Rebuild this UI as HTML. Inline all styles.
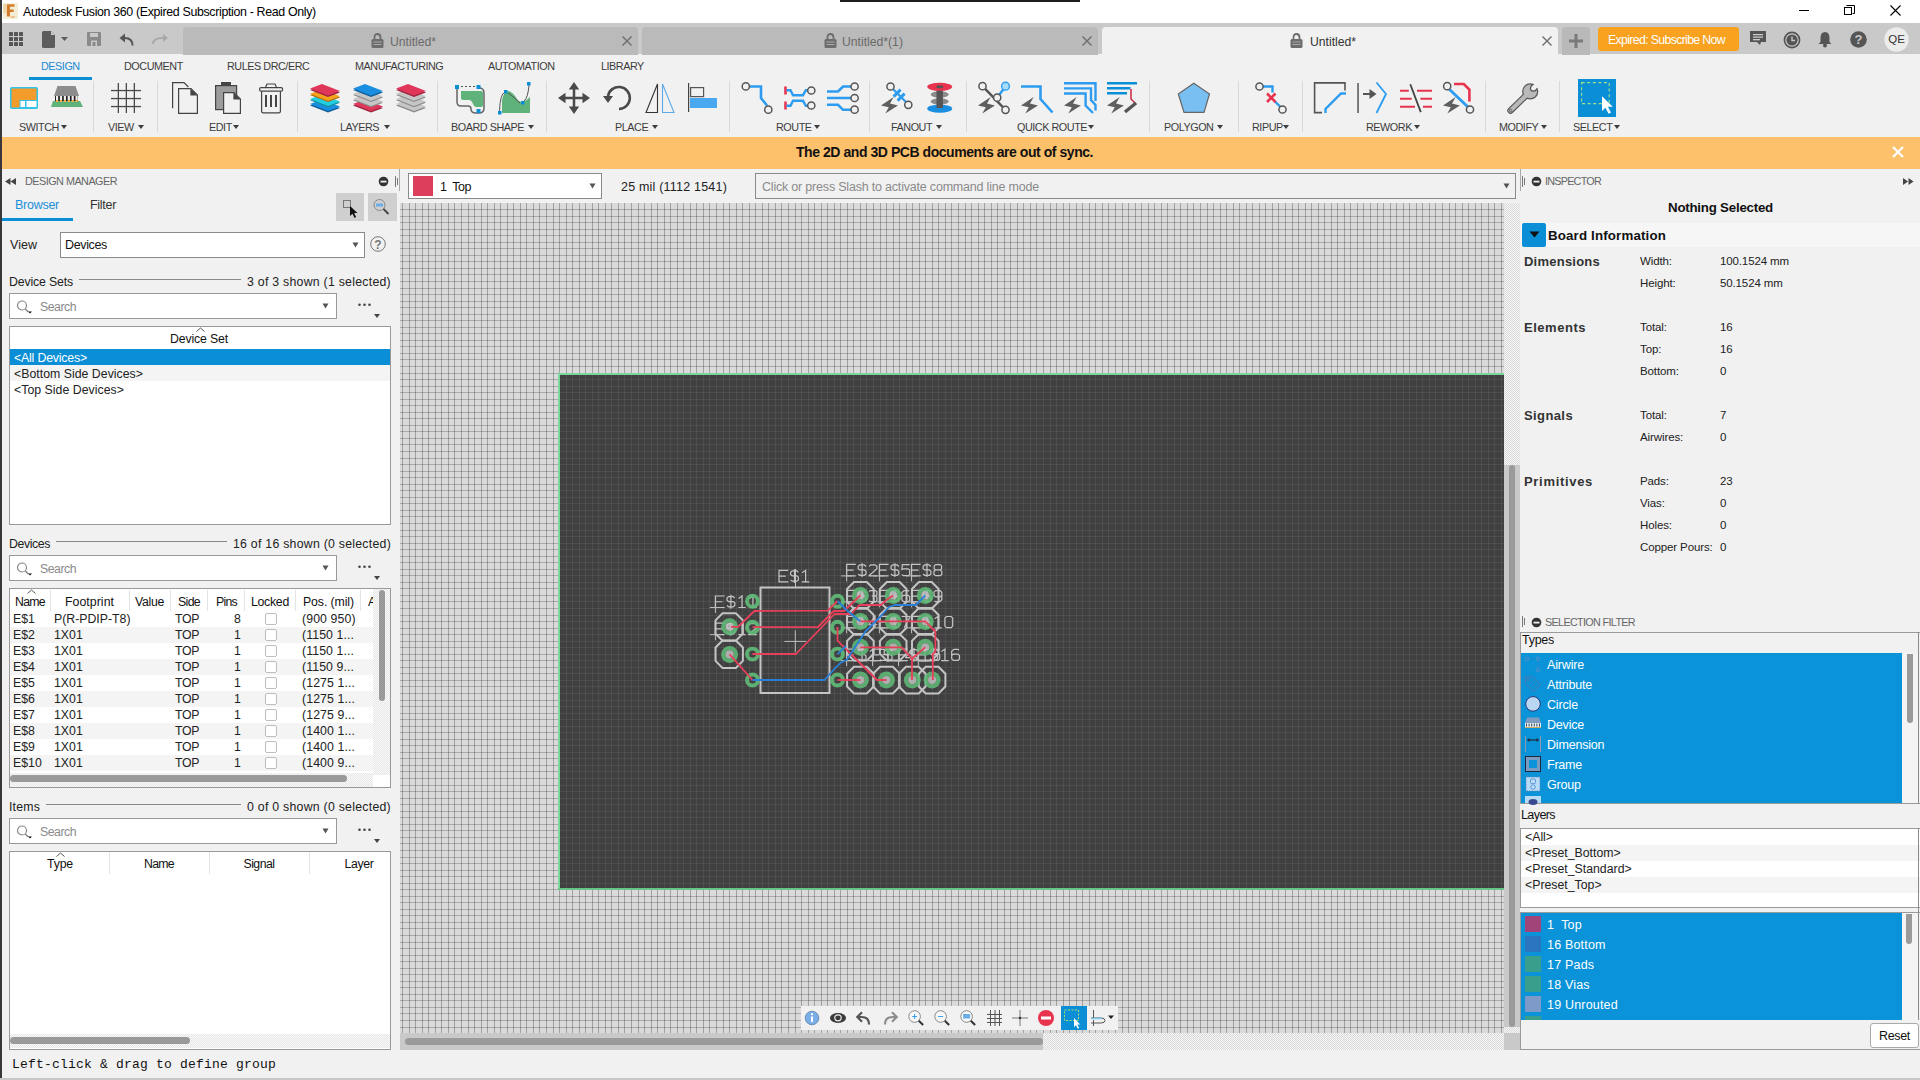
<!DOCTYPE html><html><head><meta charset="utf-8"><style>
html,body{margin:0;padding:0;width:1920px;height:1080px;overflow:hidden;background:#f1f1f1;font-family:"Liberation Sans",sans-serif;}
body>div,body>svg{position:absolute;box-sizing:border-box;}
.t{line-height:1;white-space:pre;}
</style></head><body>
<div style="left:0px;top:0px;width:1920px;height:23px;background:#fff"></div>
<div style="left:840px;top:0px;width:240px;height:2px;background:#1d1d1d"></div>
<div style="left:0px;top:23px;width:1920px;height:31px;background:#c9c9c9"></div>
<div style="left:0px;top:54px;width:1920px;height:83px;background:#f1f1f1"></div>
<div style="left:0px;top:137px;width:1920px;height:32px;background:#fdc06b"></div>
<div style="left:0px;top:1050px;width:1920px;height:30px;background:#f1f1f1"></div>
<div style="left:0px;top:1078px;width:1920px;height:2px;background:#c8c8c8"></div>
<div style="left:0px;top:0px;width:2px;height:1078px;background:#383838"></div>
<svg style="left:0;top:0" width="1920" height="1080" shape-rendering="crispEdges"><rect x="400" y="203" width="1104" height="830" fill="#dadada"/><path d="M402 203h1V1033h-1zM409 203h1V1033h-1zM415 203h1V1033h-1zM422 203h1V1033h-1zM428 203h1V1033h-1zM435 203h1V1033h-1zM441 203h1V1033h-1zM448 203h1V1033h-1zM454 203h1V1033h-1zM461 203h1V1033h-1zM468 203h1V1033h-1zM474 203h1V1033h-1zM481 203h1V1033h-1zM487 203h1V1033h-1zM494 203h1V1033h-1zM500 203h1V1033h-1zM507 203h1V1033h-1zM513 203h1V1033h-1zM520 203h1V1033h-1zM526 203h1V1033h-1zM533 203h1V1033h-1zM539 203h1V1033h-1zM546 203h1V1033h-1zM553 203h1V1033h-1zM559 203h1V1033h-1zM566 203h1V1033h-1zM572 203h1V1033h-1zM579 203h1V1033h-1zM585 203h1V1033h-1zM592 203h1V1033h-1zM598 203h1V1033h-1zM605 203h1V1033h-1zM611 203h1V1033h-1zM618 203h1V1033h-1zM624 203h1V1033h-1zM631 203h1V1033h-1zM638 203h1V1033h-1zM644 203h1V1033h-1zM651 203h1V1033h-1zM657 203h1V1033h-1zM664 203h1V1033h-1zM670 203h1V1033h-1zM677 203h1V1033h-1zM683 203h1V1033h-1zM690 203h1V1033h-1zM696 203h1V1033h-1zM703 203h1V1033h-1zM709 203h1V1033h-1zM716 203h1V1033h-1zM723 203h1V1033h-1zM729 203h1V1033h-1zM736 203h1V1033h-1zM742 203h1V1033h-1zM749 203h1V1033h-1zM755 203h1V1033h-1zM762 203h1V1033h-1zM768 203h1V1033h-1zM775 203h1V1033h-1zM781 203h1V1033h-1zM788 203h1V1033h-1zM795 203h1V1033h-1zM801 203h1V1033h-1zM808 203h1V1033h-1zM814 203h1V1033h-1zM821 203h1V1033h-1zM827 203h1V1033h-1zM834 203h1V1033h-1zM840 203h1V1033h-1zM847 203h1V1033h-1zM853 203h1V1033h-1zM860 203h1V1033h-1zM866 203h1V1033h-1zM873 203h1V1033h-1zM880 203h1V1033h-1zM886 203h1V1033h-1zM893 203h1V1033h-1zM899 203h1V1033h-1zM906 203h1V1033h-1zM912 203h1V1033h-1zM919 203h1V1033h-1zM925 203h1V1033h-1zM932 203h1V1033h-1zM938 203h1V1033h-1zM945 203h1V1033h-1zM951 203h1V1033h-1zM958 203h1V1033h-1zM965 203h1V1033h-1zM971 203h1V1033h-1zM978 203h1V1033h-1zM984 203h1V1033h-1zM991 203h1V1033h-1zM997 203h1V1033h-1zM1004 203h1V1033h-1zM1010 203h1V1033h-1zM1017 203h1V1033h-1zM1023 203h1V1033h-1zM1030 203h1V1033h-1zM1036 203h1V1033h-1zM1043 203h1V1033h-1zM1050 203h1V1033h-1zM1056 203h1V1033h-1zM1063 203h1V1033h-1zM1069 203h1V1033h-1zM1076 203h1V1033h-1zM1082 203h1V1033h-1zM1089 203h1V1033h-1zM1095 203h1V1033h-1zM1102 203h1V1033h-1zM1108 203h1V1033h-1zM1115 203h1V1033h-1zM1122 203h1V1033h-1zM1128 203h1V1033h-1zM1135 203h1V1033h-1zM1141 203h1V1033h-1zM1148 203h1V1033h-1zM1154 203h1V1033h-1zM1161 203h1V1033h-1zM1167 203h1V1033h-1zM1174 203h1V1033h-1zM1180 203h1V1033h-1zM1187 203h1V1033h-1zM1193 203h1V1033h-1zM1200 203h1V1033h-1zM1207 203h1V1033h-1zM1213 203h1V1033h-1zM1220 203h1V1033h-1zM1226 203h1V1033h-1zM1233 203h1V1033h-1zM1239 203h1V1033h-1zM1246 203h1V1033h-1zM1252 203h1V1033h-1zM1259 203h1V1033h-1zM1265 203h1V1033h-1zM1272 203h1V1033h-1zM1278 203h1V1033h-1zM1285 203h1V1033h-1zM1292 203h1V1033h-1zM1298 203h1V1033h-1zM1305 203h1V1033h-1zM1311 203h1V1033h-1zM1318 203h1V1033h-1zM1324 203h1V1033h-1zM1331 203h1V1033h-1zM1337 203h1V1033h-1zM1344 203h1V1033h-1zM1350 203h1V1033h-1zM1357 203h1V1033h-1zM1363 203h1V1033h-1zM1370 203h1V1033h-1zM1377 203h1V1033h-1zM1383 203h1V1033h-1zM1390 203h1V1033h-1zM1396 203h1V1033h-1zM1403 203h1V1033h-1zM1409 203h1V1033h-1zM1416 203h1V1033h-1zM1422 203h1V1033h-1zM1429 203h1V1033h-1zM1435 203h1V1033h-1zM1442 203h1V1033h-1zM1449 203h1V1033h-1zM1455 203h1V1033h-1zM1462 203h1V1033h-1zM1468 203h1V1033h-1zM1475 203h1V1033h-1zM1481 203h1V1033h-1zM1488 203h1V1033h-1zM1494 203h1V1033h-1zM1501 203h1V1033h-1z" fill="#000" fill-opacity="0.26"/><path d="M400 209H1504v1H400zM400 216H1504v1H400zM400 222H1504v1H400zM400 229H1504v1H400zM400 235H1504v1H400zM400 242H1504v1H400zM400 248H1504v1H400zM400 255H1504v1H400zM400 261H1504v1H400zM400 268H1504v1H400zM400 274H1504v1H400zM400 281H1504v1H400zM400 288H1504v1H400zM400 294H1504v1H400zM400 301H1504v1H400zM400 307H1504v1H400zM400 314H1504v1H400zM400 320H1504v1H400zM400 327H1504v1H400zM400 333H1504v1H400zM400 340H1504v1H400zM400 346H1504v1H400zM400 353H1504v1H400zM400 359H1504v1H400zM400 366H1504v1H400zM400 373H1504v1H400zM400 379H1504v1H400zM400 386H1504v1H400zM400 392H1504v1H400zM400 399H1504v1H400zM400 405H1504v1H400zM400 412H1504v1H400zM400 418H1504v1H400zM400 425H1504v1H400zM400 431H1504v1H400zM400 438H1504v1H400zM400 444H1504v1H400zM400 451H1504v1H400zM400 458H1504v1H400zM400 464H1504v1H400zM400 471H1504v1H400zM400 477H1504v1H400zM400 484H1504v1H400zM400 490H1504v1H400zM400 497H1504v1H400zM400 503H1504v1H400zM400 510H1504v1H400zM400 516H1504v1H400zM400 523H1504v1H400zM400 530H1504v1H400zM400 536H1504v1H400zM400 543H1504v1H400zM400 549H1504v1H400zM400 556H1504v1H400zM400 562H1504v1H400zM400 569H1504v1H400zM400 575H1504v1H400zM400 582H1504v1H400zM400 588H1504v1H400zM400 595H1504v1H400zM400 601H1504v1H400zM400 608H1504v1H400zM400 615H1504v1H400zM400 621H1504v1H400zM400 628H1504v1H400zM400 634H1504v1H400zM400 641H1504v1H400zM400 647H1504v1H400zM400 654H1504v1H400zM400 660H1504v1H400zM400 667H1504v1H400zM400 673H1504v1H400zM400 680H1504v1H400zM400 686H1504v1H400zM400 693H1504v1H400zM400 700H1504v1H400zM400 706H1504v1H400zM400 713H1504v1H400zM400 719H1504v1H400zM400 726H1504v1H400zM400 732H1504v1H400zM400 739H1504v1H400zM400 745H1504v1H400zM400 752H1504v1H400zM400 758H1504v1H400zM400 765H1504v1H400zM400 771H1504v1H400zM400 778H1504v1H400zM400 785H1504v1H400zM400 791H1504v1H400zM400 798H1504v1H400zM400 804H1504v1H400zM400 811H1504v1H400zM400 817H1504v1H400zM400 824H1504v1H400zM400 830H1504v1H400zM400 837H1504v1H400zM400 843H1504v1H400zM400 850H1504v1H400zM400 857H1504v1H400zM400 863H1504v1H400zM400 870H1504v1H400zM400 876H1504v1H400zM400 883H1504v1H400zM400 889H1504v1H400zM400 896H1504v1H400zM400 902H1504v1H400zM400 909H1504v1H400zM400 915H1504v1H400zM400 922H1504v1H400zM400 928H1504v1H400zM400 935H1504v1H400zM400 942H1504v1H400zM400 948H1504v1H400zM400 955H1504v1H400zM400 961H1504v1H400zM400 968H1504v1H400zM400 974H1504v1H400zM400 981H1504v1H400zM400 987H1504v1H400zM400 994H1504v1H400zM400 1000H1504v1H400zM400 1007H1504v1H400zM400 1013H1504v1H400zM400 1020H1504v1H400zM400 1027H1504v1H400z" fill="#000" fill-opacity="0.22"/><rect x="560" y="375" width="944" height="513" fill="#404040"/><path d="M566 375h1V888h-1zM572 375h1V888h-1zM579 375h1V888h-1zM585 375h1V888h-1zM592 375h1V888h-1zM598 375h1V888h-1zM605 375h1V888h-1zM611 375h1V888h-1zM618 375h1V888h-1zM624 375h1V888h-1zM631 375h1V888h-1zM638 375h1V888h-1zM644 375h1V888h-1zM651 375h1V888h-1zM657 375h1V888h-1zM664 375h1V888h-1zM670 375h1V888h-1zM677 375h1V888h-1zM683 375h1V888h-1zM690 375h1V888h-1zM696 375h1V888h-1zM703 375h1V888h-1zM709 375h1V888h-1zM716 375h1V888h-1zM723 375h1V888h-1zM729 375h1V888h-1zM736 375h1V888h-1zM742 375h1V888h-1zM749 375h1V888h-1zM755 375h1V888h-1zM762 375h1V888h-1zM768 375h1V888h-1zM775 375h1V888h-1zM781 375h1V888h-1zM788 375h1V888h-1zM795 375h1V888h-1zM801 375h1V888h-1zM808 375h1V888h-1zM814 375h1V888h-1zM821 375h1V888h-1zM827 375h1V888h-1zM834 375h1V888h-1zM840 375h1V888h-1zM847 375h1V888h-1zM853 375h1V888h-1zM860 375h1V888h-1zM866 375h1V888h-1zM873 375h1V888h-1zM880 375h1V888h-1zM886 375h1V888h-1zM893 375h1V888h-1zM899 375h1V888h-1zM906 375h1V888h-1zM912 375h1V888h-1zM919 375h1V888h-1zM925 375h1V888h-1zM932 375h1V888h-1zM938 375h1V888h-1zM945 375h1V888h-1zM951 375h1V888h-1zM958 375h1V888h-1zM965 375h1V888h-1zM971 375h1V888h-1zM978 375h1V888h-1zM984 375h1V888h-1zM991 375h1V888h-1zM997 375h1V888h-1zM1004 375h1V888h-1zM1010 375h1V888h-1zM1017 375h1V888h-1zM1023 375h1V888h-1zM1030 375h1V888h-1zM1036 375h1V888h-1zM1043 375h1V888h-1zM1050 375h1V888h-1zM1056 375h1V888h-1zM1063 375h1V888h-1zM1069 375h1V888h-1zM1076 375h1V888h-1zM1082 375h1V888h-1zM1089 375h1V888h-1zM1095 375h1V888h-1zM1102 375h1V888h-1zM1108 375h1V888h-1zM1115 375h1V888h-1zM1122 375h1V888h-1zM1128 375h1V888h-1zM1135 375h1V888h-1zM1141 375h1V888h-1zM1148 375h1V888h-1zM1154 375h1V888h-1zM1161 375h1V888h-1zM1167 375h1V888h-1zM1174 375h1V888h-1zM1180 375h1V888h-1zM1187 375h1V888h-1zM1193 375h1V888h-1zM1200 375h1V888h-1zM1207 375h1V888h-1zM1213 375h1V888h-1zM1220 375h1V888h-1zM1226 375h1V888h-1zM1233 375h1V888h-1zM1239 375h1V888h-1zM1246 375h1V888h-1zM1252 375h1V888h-1zM1259 375h1V888h-1zM1265 375h1V888h-1zM1272 375h1V888h-1zM1278 375h1V888h-1zM1285 375h1V888h-1zM1292 375h1V888h-1zM1298 375h1V888h-1zM1305 375h1V888h-1zM1311 375h1V888h-1zM1318 375h1V888h-1zM1324 375h1V888h-1zM1331 375h1V888h-1zM1337 375h1V888h-1zM1344 375h1V888h-1zM1350 375h1V888h-1zM1357 375h1V888h-1zM1363 375h1V888h-1zM1370 375h1V888h-1zM1377 375h1V888h-1zM1383 375h1V888h-1zM1390 375h1V888h-1zM1396 375h1V888h-1zM1403 375h1V888h-1zM1409 375h1V888h-1zM1416 375h1V888h-1zM1422 375h1V888h-1zM1429 375h1V888h-1zM1435 375h1V888h-1zM1442 375h1V888h-1zM1449 375h1V888h-1zM1455 375h1V888h-1zM1462 375h1V888h-1zM1468 375h1V888h-1zM1475 375h1V888h-1zM1481 375h1V888h-1zM1488 375h1V888h-1zM1494 375h1V888h-1zM1501 375h1V888h-1z" fill="#fff" fill-opacity="0.07"/><path d="M560 379H1504v1H560zM560 386H1504v1H560zM560 392H1504v1H560zM560 399H1504v1H560zM560 405H1504v1H560zM560 412H1504v1H560zM560 418H1504v1H560zM560 425H1504v1H560zM560 431H1504v1H560zM560 438H1504v1H560zM560 444H1504v1H560zM560 451H1504v1H560zM560 458H1504v1H560zM560 464H1504v1H560zM560 471H1504v1H560zM560 477H1504v1H560zM560 484H1504v1H560zM560 490H1504v1H560zM560 497H1504v1H560zM560 503H1504v1H560zM560 510H1504v1H560zM560 516H1504v1H560zM560 523H1504v1H560zM560 530H1504v1H560zM560 536H1504v1H560zM560 543H1504v1H560zM560 549H1504v1H560zM560 556H1504v1H560zM560 562H1504v1H560zM560 569H1504v1H560zM560 575H1504v1H560zM560 582H1504v1H560zM560 588H1504v1H560zM560 595H1504v1H560zM560 601H1504v1H560zM560 608H1504v1H560zM560 615H1504v1H560zM560 621H1504v1H560zM560 628H1504v1H560zM560 634H1504v1H560zM560 641H1504v1H560zM560 647H1504v1H560zM560 654H1504v1H560zM560 660H1504v1H560zM560 667H1504v1H560zM560 673H1504v1H560zM560 680H1504v1H560zM560 686H1504v1H560zM560 693H1504v1H560zM560 700H1504v1H560zM560 706H1504v1H560zM560 713H1504v1H560zM560 719H1504v1H560zM560 726H1504v1H560zM560 732H1504v1H560zM560 739H1504v1H560zM560 745H1504v1H560zM560 752H1504v1H560zM560 758H1504v1H560zM560 765H1504v1H560zM560 771H1504v1H560zM560 778H1504v1H560zM560 785H1504v1H560zM560 791H1504v1H560zM560 798H1504v1H560zM560 804H1504v1H560zM560 811H1504v1H560zM560 817H1504v1H560zM560 824H1504v1H560zM560 830H1504v1H560zM560 837H1504v1H560zM560 843H1504v1H560zM560 850H1504v1H560zM560 857H1504v1H560zM560 863H1504v1H560zM560 870H1504v1H560zM560 876H1504v1H560zM560 883H1504v1H560z" fill="#fff" fill-opacity="0.07"/><rect x="558" y="373" width="946" height="2" fill="#7ad79a"/><rect x="558" y="373" width="2" height="517" fill="#7ad79a"/><rect x="558" y="888" width="946" height="2" fill="#66c486"/></svg>
<svg style="left:3px;top:3px;" width="15" height="16" viewBox="0 0 15 16"><rect x="0" y="0" width="15" height="16" fill="#f4eed6"/><rect x="0.3" y="1" width="2.8" height="9" fill="#f0d6a6"/><path d="M3.8 1.8Q3.8 1.2 4.6 1.2H11q.6 0 .6.8v1.2q0 .6-.6.6H7v2.7h3.2q.5 0 .5.6v1.3q0 .6-.5.6H7v3.8q0 .6-.6.6H4.4q-.6 0-.6-.6z" fill="#d27c2c"/><rect x="7.5" y="13.3" width="4.5" height="1.4" fill="#eba45c" opacity=".8"/></svg>
<div class="t" style="left:23px;top:5.50px;font-size:12.4px;color:#000;font-weight:normal;font-family:'Liberation Sans', sans-serif;letter-spacing:-0.343px;">Autodesk Fusion 360 (Expired Subscription - Read Only)</div>
<svg style="left:1790px;top:0px;" width="130" height="23" viewBox="0 0 130 23"><rect x="9" y="10" width="10" height="1" fill="#000"/><path d="M56.5 5.5h8v8h-2" fill="none" stroke="#000"/><rect x="54.5" y="7.5" width="7" height="7" fill="none" stroke="#000"/><path d="M100.5 5.5l10 10M110.5 5.5l-10 10" stroke="#000" stroke-width="1.1"/></svg>
<svg style="left:9px;top:32px;" width="14" height="14" viewBox="0 0 14 14"><rect x="0" y="0" width="4" height="4" rx="0.6" fill="#555"/><rect x="5" y="0" width="4" height="4" rx="0.6" fill="#555"/><rect x="10" y="0" width="4" height="4" rx="0.6" fill="#555"/><rect x="0" y="5" width="4" height="4" rx="0.6" fill="#555"/><rect x="5" y="5" width="4" height="4" rx="0.6" fill="#555"/><rect x="10" y="5" width="4" height="4" rx="0.6" fill="#555"/><rect x="0" y="10" width="4" height="4" rx="0.6" fill="#555"/><rect x="5" y="10" width="4" height="4" rx="0.6" fill="#555"/><rect x="10" y="10" width="4" height="4" rx="0.6" fill="#555"/></svg>
<svg style="left:42px;top:31px;" width="28" height="17" viewBox="0 0 28 17"><path d="M0 1.5Q0 0 1.5 0H9l4 4v11.5Q13 17 11.5 17h-10Q0 17 0 15.5z" fill="#5c5c5c"/><path d="M9 0v4h4" fill="#c9c9c9"/><path d="M19 6h7l-3.5 4z" fill="#5c5c5c"/></svg>
<svg style="left:87px;top:32px;" width="14" height="14" viewBox="0 0 14 14"><path d="M0 1Q0 0 1 0h12q1 0 1 1v12q0 1-1 1H1q-1 0-1-1z" fill="#8a8a8a"/><rect x="3" y="1" width="8" height="4" fill="#c9c9c9"/><rect x="4" y="8.5" width="6" height="5.5" fill="#c9c9c9"/><rect x="5.5" y="10" width="3" height="4" fill="#8a8a8a"/></svg>
<svg style="left:119px;top:32px;" width="16" height="14" viewBox="0 0 16 14"><path d="M13.5 13.5Q13.5 6 6 6H2" fill="none" stroke="#555" stroke-width="2"/><path d="M0.5 6L6 1.5v9z" fill="#555"/></svg>
<svg style="left:151px;top:33px;" width="18" height="12" viewBox="0 0 18 12"><path d="M1.5 11Q3 5 11 5h3" fill="none" stroke="#a9a9a9" stroke-width="2"/><path d="M17 5l-5-4v8z" fill="#a9a9a9"/></svg>
<div style="left:183px;top:27px;width:455px;height:28px;background:#bababa;border-radius:4px 4px 0 0"></div>
<svg style="left:371px;top:33px;" width="13" height="15" viewBox="0 0 13 15"><path d="M3.5 6V4.5Q3.5 1 6.5 1t3 3.5V6" fill="none" stroke="#6d6d6d" stroke-width="1.8"/><rect x="0.5" y="6" width="12" height="9" rx="1.5" fill="#6d6d6d"/><rect x="2.5" y="8.5" width="8" height="1" fill="#d0d0d0" opacity=".6"/><rect x="2.5" y="11" width="8" height="1" fill="#d0d0d0" opacity=".6"/></svg>
<div class="t" style="left:390px;top:35.67px;font-size:12.2px;color:#6a6a6a;font-weight:normal;font-family:'Liberation Sans', sans-serif;">Untitled*</div>
<svg style="left:622px;top:36px;" width="10" height="10" viewBox="0 0 10 10"><path d="M0.5 0.5l9 9M9.5 0.5l-9 9" stroke="#6d6d6d" stroke-width="1.4"/></svg>
<div style="left:642px;top:27px;width:456px;height:28px;background:#bababa;border-radius:4px 4px 0 0"></div>
<svg style="left:824px;top:33px;" width="13" height="15" viewBox="0 0 13 15"><path d="M3.5 6V4.5Q3.5 1 6.5 1t3 3.5V6" fill="none" stroke="#6d6d6d" stroke-width="1.8"/><rect x="0.5" y="6" width="12" height="9" rx="1.5" fill="#6d6d6d"/><rect x="2.5" y="8.5" width="8" height="1" fill="#d0d0d0" opacity=".6"/><rect x="2.5" y="11" width="8" height="1" fill="#d0d0d0" opacity=".6"/></svg>
<div class="t" style="left:842px;top:35.67px;font-size:12.2px;color:#6a6a6a;font-weight:normal;font-family:'Liberation Sans', sans-serif;">Untitled*(1)</div>
<svg style="left:1082px;top:36px;" width="10" height="10" viewBox="0 0 10 10"><path d="M0.5 0.5l9 9M9.5 0.5l-9 9" stroke="#6d6d6d" stroke-width="1.4"/></svg>
<div style="left:1102px;top:27px;width:456px;height:28px;background:#f1f1f1;border-radius:4px 4px 0 0"></div>
<svg style="left:1290px;top:33px;" width="13" height="15" viewBox="0 0 13 15"><path d="M3.5 6V4.5Q3.5 1 6.5 1t3 3.5V6" fill="none" stroke="#6d6d6d" stroke-width="1.8"/><rect x="0.5" y="6" width="12" height="9" rx="1.5" fill="#6d6d6d"/><rect x="2.5" y="8.5" width="8" height="1" fill="#d0d0d0" opacity=".6"/><rect x="2.5" y="11" width="8" height="1" fill="#d0d0d0" opacity=".6"/></svg>
<div class="t" style="left:1310px;top:35.67px;font-size:12.2px;color:#333;font-weight:normal;font-family:'Liberation Sans', sans-serif;">Untitled*</div>
<svg style="left:1542px;top:36px;" width="10" height="10" viewBox="0 0 10 10"><path d="M0.5 0.5l9 9M9.5 0.5l-9 9" stroke="#6d6d6d" stroke-width="1.4"/></svg>
<div style="left:1562px;top:27px;width:28px;height:28px;background:#b9b9b9;border-radius:3px 3px 0 0"></div>
<svg style="left:1569px;top:34px;" width="14" height="14" viewBox="0 0 14 14"><rect x="0" y="5.5" width="14" height="3" fill="#7a7a7a"/><rect x="5.5" y="0" width="3" height="14" fill="#7a7a7a"/></svg>
<div style="left:1598px;top:27px;width:141px;height:24px;background:#f8a21f;border-radius:3px"></div>
<div class="t" style="left:1608px;top:33.59px;font-size:12.3px;color:#fff;font-weight:normal;font-family:'Liberation Sans', sans-serif;letter-spacing:-0.648px;">Expired: Subscribe Now</div>
<svg style="left:1750px;top:31px;" width="18" height="17" viewBox="0 0 18 17"><path d="M0 0h16v11H11l-1 3-3-3H0z" fill="#555"/><rect x="3" y="3" width="10" height="1.3" fill="#c9c9c9"/><rect x="3" y="5.5" width="10" height="1.3" fill="#c9c9c9"/><rect x="3" y="8" width="7" height="1.3" fill="#c9c9c9"/></svg>
<svg style="left:1783px;top:31px;" width="18" height="18" viewBox="0 0 18 18"><circle cx="9" cy="9" r="7.6" fill="none" stroke="#555" stroke-width="1.6"/><circle cx="9" cy="9" r="5.6" fill="#555"/><path d="M9 5.5V9.5h3" fill="none" stroke="#c9c9c9" stroke-width="1.4"/></svg>
<svg style="left:1818px;top:31px;" width="14" height="17" viewBox="0 0 14 17"><path d="M7 1Q11.5 1 11.5 7V11L13.5 13H0.5L2.5 11V7Q2.5 1 7 1z" fill="#555"/><circle cx="7" cy="14.5" r="2" fill="#555"/></svg>
<svg style="left:1850px;top:31px;" width="17" height="17" viewBox="0 0 17 17"><circle cx="8.5" cy="8.5" r="8.3" fill="#555"/><text x="8.5" y="13.2" text-anchor="middle" font-family="Liberation Sans" font-weight="bold" font-size="13" fill="#c9c9c9">?</text></svg>
<svg style="left:1884px;top:27px;" width="25" height="25" viewBox="0 0 25 25"><circle cx="12.5" cy="12.5" r="12.2" fill="#ececec"/></svg>
<div class="t" style="left:1396.5px;width:1000px;text-align:center;top:34.27px;font-size:11.5px;color:#333;font-weight:normal;font-family:'Liberation Sans', sans-serif;">QE</div>
<div class="t" style="left:41px;top:61.36px;font-size:10.8px;color:#1b8ad3;font-weight:normal;font-family:'Liberation Sans', sans-serif;letter-spacing:-0.45px;">DESIGN</div>
<div class="t" style="left:124px;top:61.36px;font-size:10.8px;color:#3c3c3c;font-weight:normal;font-family:'Liberation Sans', sans-serif;letter-spacing:-0.45px;">DOCUMENT</div>
<div class="t" style="left:227px;top:61.36px;font-size:10.8px;color:#3c3c3c;font-weight:normal;font-family:'Liberation Sans', sans-serif;letter-spacing:-0.45px;">RULES DRC/ERC</div>
<div class="t" style="left:355px;top:61.36px;font-size:10.8px;color:#3c3c3c;font-weight:normal;font-family:'Liberation Sans', sans-serif;letter-spacing:-0.45px;">MANUFACTURING</div>
<div class="t" style="left:488px;top:61.36px;font-size:10.8px;color:#3c3c3c;font-weight:normal;font-family:'Liberation Sans', sans-serif;letter-spacing:-0.45px;">AUTOMATION</div>
<div class="t" style="left:601px;top:61.36px;font-size:10.8px;color:#3c3c3c;font-weight:normal;font-family:'Liberation Sans', sans-serif;letter-spacing:-0.45px;">LIBRARY</div>
<div style="left:29px;top:77px;width:63px;height:3px;background:#0a8fd6"></div>
<div style="left:93px;top:81px;width:1px;height:51px;background:#d9d9d9"></div>
<div style="left:157px;top:81px;width:1px;height:51px;background:#d9d9d9"></div>
<div style="left:297px;top:81px;width:1px;height:51px;background:#d9d9d9"></div>
<div style="left:437px;top:81px;width:1px;height:51px;background:#d9d9d9"></div>
<div style="left:546px;top:81px;width:1px;height:51px;background:#d9d9d9"></div>
<div style="left:729px;top:81px;width:1px;height:51px;background:#d9d9d9"></div>
<div style="left:869px;top:81px;width:1px;height:51px;background:#d9d9d9"></div>
<div style="left:966px;top:81px;width:1px;height:51px;background:#d9d9d9"></div>
<div style="left:1149px;top:81px;width:1px;height:51px;background:#d9d9d9"></div>
<div style="left:1238px;top:81px;width:1px;height:51px;background:#d9d9d9"></div>
<div style="left:1302px;top:81px;width:1px;height:51px;background:#d9d9d9"></div>
<div style="left:1485px;top:81px;width:1px;height:51px;background:#d9d9d9"></div>
<div style="left:1559px;top:81px;width:1px;height:51px;background:#d9d9d9"></div>
<div class="t" style="left:19px;top:121.86px;font-size:10.8px;color:#3c3c3c;font-weight:normal;font-family:'Liberation Sans', sans-serif;letter-spacing:-0.45px;">SWITCH</div>
<div class="t" style="left:108px;top:121.86px;font-size:10.8px;color:#3c3c3c;font-weight:normal;font-family:'Liberation Sans', sans-serif;letter-spacing:-0.45px;">VIEW</div>
<div class="t" style="left:209px;top:121.86px;font-size:10.8px;color:#3c3c3c;font-weight:normal;font-family:'Liberation Sans', sans-serif;letter-spacing:-0.45px;">EDIT</div>
<div class="t" style="left:340px;top:121.86px;font-size:10.8px;color:#3c3c3c;font-weight:normal;font-family:'Liberation Sans', sans-serif;letter-spacing:-0.45px;">LAYERS</div>
<div class="t" style="left:451px;top:121.86px;font-size:10.8px;color:#3c3c3c;font-weight:normal;font-family:'Liberation Sans', sans-serif;letter-spacing:-0.45px;">BOARD SHAPE</div>
<div class="t" style="left:615px;top:121.86px;font-size:10.8px;color:#3c3c3c;font-weight:normal;font-family:'Liberation Sans', sans-serif;letter-spacing:-0.45px;">PLACE</div>
<div class="t" style="left:776px;top:121.86px;font-size:10.8px;color:#3c3c3c;font-weight:normal;font-family:'Liberation Sans', sans-serif;letter-spacing:-0.45px;">ROUTE</div>
<div class="t" style="left:891px;top:121.86px;font-size:10.8px;color:#3c3c3c;font-weight:normal;font-family:'Liberation Sans', sans-serif;letter-spacing:-0.45px;">FANOUT</div>
<div class="t" style="left:1017px;top:121.86px;font-size:10.8px;color:#3c3c3c;font-weight:normal;font-family:'Liberation Sans', sans-serif;letter-spacing:-0.45px;">QUICK ROUTE</div>
<div class="t" style="left:1164px;top:121.86px;font-size:10.8px;color:#3c3c3c;font-weight:normal;font-family:'Liberation Sans', sans-serif;letter-spacing:-0.45px;">POLYGON</div>
<div class="t" style="left:1252px;top:121.86px;font-size:10.8px;color:#3c3c3c;font-weight:normal;font-family:'Liberation Sans', sans-serif;letter-spacing:-0.45px;">RIPUP</div>
<div class="t" style="left:1366px;top:121.86px;font-size:10.8px;color:#3c3c3c;font-weight:normal;font-family:'Liberation Sans', sans-serif;letter-spacing:-0.45px;">REWORK</div>
<div class="t" style="left:1499px;top:121.86px;font-size:10.8px;color:#3c3c3c;font-weight:normal;font-family:'Liberation Sans', sans-serif;letter-spacing:-0.45px;">MODIFY</div>
<div class="t" style="left:1573px;top:121.86px;font-size:10.8px;color:#3c3c3c;font-weight:normal;font-family:'Liberation Sans', sans-serif;letter-spacing:-0.45px;">SELECT</div>
<svg style="left:0px;top:0px;" width="1920" height="140" viewBox="0 0 1920 140"><path d="M61 125h6l-3 4z" fill="#3c3c3c"/><path d="M138 125h6l-3 4z" fill="#3c3c3c"/><path d="M233 125h6l-3 4z" fill="#3c3c3c"/><path d="M384 125h6l-3 4z" fill="#3c3c3c"/><path d="M528 125h6l-3 4z" fill="#3c3c3c"/><path d="M652 125h6l-3 4z" fill="#3c3c3c"/><path d="M814 125h6l-3 4z" fill="#3c3c3c"/><path d="M936 125h6l-3 4z" fill="#3c3c3c"/><path d="M1088 125h6l-3 4z" fill="#3c3c3c"/><path d="M1217 125h6l-3 4z" fill="#3c3c3c"/><path d="M1283 125h6l-3 4z" fill="#3c3c3c"/><path d="M1414 125h6l-3 4z" fill="#3c3c3c"/><path d="M1541 125h6l-3 4z" fill="#3c3c3c"/><path d="M1614 125h6l-3 4z" fill="#3c3c3c"/><rect x="10.75" y="87.75" width="26.5" height="20.5" rx="1" fill="#f39c2c" stroke="#34c3e8" stroke-width="1.5"/><rect x="19.5" y="100" width="18" height="8" fill="#34c3e8"/><rect x="20.5" y="101" width="4.5" height="6" fill="#fff"/><rect x="26.5" y="101" width="10" height="6" fill="#fff"/><path d="M53 101h27l3 6H51z" fill="#5fb27a"/><path d="M57.5 86h18l3.5 10H54z" fill="#8c8c8c"/><rect x="55" y="96" width="23" height="5" fill="#222"/><rect x="56.0" y="96" width="2.2" height="4" fill="#eee"/><rect x="56.0" y="100" width="2.2" height="2" fill="#f5b04a"/><rect x="59.9" y="96" width="2.2" height="4" fill="#eee"/><rect x="59.9" y="100" width="2.2" height="2" fill="#f5b04a"/><rect x="63.8" y="96" width="2.2" height="4" fill="#eee"/><rect x="63.8" y="100" width="2.2" height="2" fill="#f5b04a"/><rect x="67.7" y="96" width="2.2" height="4" fill="#eee"/><rect x="67.7" y="100" width="2.2" height="2" fill="#f5b04a"/><rect x="71.6" y="96" width="2.2" height="4" fill="#eee"/><rect x="71.6" y="100" width="2.2" height="2" fill="#f5b04a"/><rect x="75.5" y="96" width="2.2" height="4" fill="#eee"/><rect x="75.5" y="100" width="2.2" height="2" fill="#f5b04a"/><rect x="117.7" y="83" width="1.3" height="30" fill="#4a4a4a"/><rect x="125.7" y="83" width="1.3" height="30" fill="#4a4a4a"/><rect x="133.7" y="83" width="1.3" height="30" fill="#4a4a4a"/><rect x="111" y="89.9" width="30" height="1.3" fill="#4a4a4a"/><rect x="111" y="97.9" width="30" height="1.3" fill="#4a4a4a"/><rect x="111" y="105.9" width="30" height="1.3" fill="#4a4a4a"/><path d="M172.6 108.2V82.6H184l4.4 4.4" fill="none" stroke="#444" stroke-width="1.2"/><path d="M178.6 113.4V88.6h12.4l6.4 6.4v18.4z" fill="#f1f1f1" stroke="#444" stroke-width="1.2"/><path d="M190.4 88.6v6.8h7z" fill="#444"/><rect x="215.6" y="85.6" width="21" height="24" fill="#9c9c9c" stroke="#444" stroke-width="1.2"/><rect x="221" y="82" width="10" height="4" fill="#444"/><path d="M223.6 113.4V92.6h10.4l6.4 6.4v14.4z" fill="#f1f1f1" stroke="#444" stroke-width="1.2"/><path d="M233.4 92.6v6.8h7z" fill="#444"/><rect x="259.6" y="87.6" width="23" height="3.6" rx="1.5" fill="none" stroke="#444" stroke-width="1.2"/><path d="M265.5 87.6l1.5-3.6h8l1.5 3.6" fill="none" stroke="#444" stroke-width="1.2"/><path d="M261.6 91.2v20q0 1.6 1.6 1.6h15.6q1.6 0 1.6-1.6v-20" fill="none" stroke="#444" stroke-width="1.2"/><rect x="265" y="95" width="2" height="12" fill="#444"/><rect x="270" y="95" width="2" height="12" fill="#444"/><rect x="275" y="95" width="2" height="12" fill="#444"/><path d="M310 105.5L322 101.0L340 108.0L328 112.5z" fill="#105f9a"/><path d="M310 104.1L322 99.6L340 106.6L328 111.1z" fill="#1a8ee0"/><path d="M310 100.30000000000001L322 95.80000000000001L340 102.80000000000001L328 107.30000000000001z" fill="#168f9c"/><path d="M310 98.9L322 94.4L340 101.4L328 105.9z" fill="#23cde0"/><path d="M310 95.10000000000001L322 90.60000000000001L340 97.60000000000001L328 102.10000000000001z" fill="#b06f10"/><path d="M310 93.7L322 89.2L340 96.2L328 100.7z" fill="#f7a21b"/><path d="M310 89.9L322 85.4L340 92.4L328 96.9z" fill="#9e2640"/><path d="M310 88.5L322 84L340 91L328 95.5z" fill="#e0365a"/><path d="M353 105.5L365 101.0L383 108.0L371 112.5z" fill="#9e2640"/><path d="M353 104.1L365 99.6L383 106.6L371 111.1z" fill="#e0365a"/><path d="M353 100.30000000000001L365 95.80000000000001L383 102.80000000000001L371 107.30000000000001z" fill="#8c8c8c"/><path d="M353 98.9L365 94.4L383 101.4L371 105.9z" fill="#c6c6c6"/><path d="M353 95.10000000000001L365 90.60000000000001L383 97.60000000000001L371 102.10000000000001z" fill="#8c8c8c"/><path d="M353 93.7L365 89.2L383 96.2L371 100.7z" fill="#c6c6c6"/><path d="M353 89.9L365 85.4L383 92.4L371 96.9z" fill="#105f9a"/><path d="M353 88.5L365 84L383 91L371 95.5z" fill="#1a8ee0"/><path d="M396 105.5L408 101.0L426 108.0L414 112.5z" fill="#8c8c8c"/><path d="M396 104.1L408 99.6L426 106.6L414 111.1z" fill="#c6c6c6"/><path d="M396 100.30000000000001L408 95.80000000000001L426 102.80000000000001L414 107.30000000000001z" fill="#8c8c8c"/><path d="M396 98.9L408 94.4L426 101.4L414 105.9z" fill="#c6c6c6"/><path d="M396 95.10000000000001L408 90.60000000000001L426 97.60000000000001L414 102.10000000000001z" fill="#8c8c8c"/><path d="M396 93.7L408 89.2L426 96.2L414 100.7z" fill="#c6c6c6"/><path d="M396 89.9L408 85.4L426 92.4L414 96.9z" fill="#9e2640"/><path d="M396 88.5L408 84L426 91L414 95.5z" fill="#e0365a"/><path d="M457 89v13q0 4 4 4h7q3 0 3 3q0 4 5 4h3q5 0 5-5V93q0-5-5-5" fill="none" stroke="#666" stroke-width="1.5"/><path d="M461 91h20q2 0 2 2v12q0 2-2 2h-5q-2 0-3-3l-1-2q-1-2-3-2h-6q-2 0-2-2z" fill="#5fb27a"/><path d="M461 86.5h15" stroke="#555" stroke-width="1.2" stroke-dasharray="2 2"/><rect x="455" y="85" width="4" height="4" fill="#0a8fd6"/><rect x="476.5" y="85" width="4" height="4" fill="#0a8fd6"/><rect x="476.5" y="109" width="4" height="4" fill="#0a8fd6"/><path d="M502 113V100q2-9 6-9q4 0 9 8q2 3 4 3q4 0 9-5v16z" fill="#5fb27a"/><path d="M499.5 112Q500 93 505 92.5M508 93Q514 97 520 103M524 101Q528 98 529 85" fill="none" stroke="#555" stroke-width="1"/><rect x="504" y="90" width="3.5" height="3.5" fill="#0a8fd6"/><rect x="521" y="101" width="3.5" height="3.5" fill="#0a8fd6"/><rect x="498" y="111" width="3.5" height="3.5" fill="#0a8fd6"/><rect x="527" y="82" width="3.5" height="3.5" fill="#0a8fd6"/><path d="M574 88V108M564 98H584" stroke="#4a4a4a" stroke-width="2.5"/><path d="M574 82l5.2 7.5h-10.4zM574 114l5.2-7.5h-10.4zM558 98l7.5-5.2v10.4zM590 98l-7.5-5.2v10.4z" fill="#4a4a4a"/><path d="M608 96A11 11 0 1 1 619 109" fill="none" stroke="#4a4a4a" stroke-width="2.6"/><path d="M603 96h10l-5 7z" fill="#4a4a4a"/><path d="M657.5 84v28.5h-11.5z" fill="none" stroke="#333" stroke-width="1.1"/><path d="M662.5 84v28.5h11.5z" fill="none" stroke="#5ea9e8" stroke-width="1.1"/><rect x="688" y="83" width="1.2" height="29" fill="#444"/><rect x="690.6" y="87.6" width="13" height="9" fill="#f1f1f1" stroke="#555" stroke-width="1.2"/><rect x="690" y="98" width="27" height="10" fill="#4aa8f0"/><path d="M749 86.5h12v11.5l6 7.5" fill="none" stroke="#2d9cf0" stroke-width="2.6"/><circle cx="745.8" cy="86.4" r="3.6" fill="#f1f1f1" stroke="#555" stroke-width="1.5"/><circle cx="768.3" cy="109.7" r="3.6" fill="#f1f1f1" stroke="#555" stroke-width="1.5"/><rect x="784.2" y="86.5" width="2.6" height="8" fill="#e8334f"/><rect x="784.2" y="101.5" width="2.6" height="8" fill="#e8334f"/><path d="M786.5 90.2h4l2.5 5h10l2.8-5h2.5M786.5 105.8h4l2.5-5h10l2.8 5h2.5" fill="none" stroke="#2d9cf0" stroke-width="2.4"/><circle cx="811.3" cy="90.5" r="3.6" fill="#f1f1f1" stroke="#555" stroke-width="1.5"/><circle cx="811.3" cy="105.5" r="3.6" fill="#f1f1f1" stroke="#555" stroke-width="1.5"/><path d="M827 91.5h11l5-5h8.5M827 98h24.5M827 104.8h11l5 5h8.5" fill="none" stroke="#2d9cf0" stroke-width="2.6"/><circle cx="854.6" cy="86.5" r="3.6" fill="#f1f1f1" stroke="#555" stroke-width="1.5"/><circle cx="854.6" cy="98" r="3.6" fill="#f1f1f1" stroke="#555" stroke-width="1.5"/><circle cx="854.6" cy="109.7" r="3.6" fill="#f1f1f1" stroke="#555" stroke-width="1.5"/><path d="M893.7 97L881 105.5L888.8 107.3L885.3 113.5L897.9 105.4L890 103.6z" fill="#5e5e5e"/><path d="M893 89l14.5 14.5" stroke="#2d9cf0" stroke-width="2.2"/><path d="M893.6 96.6l7-7M897.6 100.6l7-7" stroke="#2d9cf0" stroke-width="3"/><circle cx="890.5" cy="86.5" r="3.6" fill="#f1f1f1" stroke="#555" stroke-width="1.5"/><circle cx="908.3" cy="104.8" r="3.6" fill="#f1f1f1" stroke="#555" stroke-width="1.5"/><ellipse cx="939.7" cy="108.7" rx="12.5" ry="4" fill="#1a8ee0"/><ellipse cx="939.7" cy="101.5" rx="9" ry="3.2" fill="#8a8a8a"/><ellipse cx="939.7" cy="94.5" rx="9" ry="3.2" fill="#8a8a8a"/><rect x="936.5" y="86" width="6.4" height="22" fill="#555"/><ellipse cx="939.7" cy="86.8" rx="12.5" ry="4" fill="#e8334f"/><ellipse cx="939.7" cy="86.8" rx="3.5" ry="1.5" fill="#555"/><path d="M990.7 97L978 105.5L985.8 107.3L982.3 113.5L994.9 105.4L987 103.6z" fill="#5e5e5e"/><path d="M982.5 86.2L1005.5 109.8" stroke="#555" stroke-width="2.4"/><path d="M997.2 97.7L1005.5 86.2" stroke="#2d9cf0" stroke-width="2.4"/><circle cx="982.5" cy="86.2" r="3.6" fill="#f1f1f1" stroke="#555" stroke-width="1.5"/><circle cx="997.2" cy="97.7" r="3.6" fill="#f1f1f1" stroke="#555" stroke-width="1.5"/><circle cx="1005.5" cy="109.8" r="3.6" fill="#f1f1f1" stroke="#555" stroke-width="1.5"/><circle cx="1005.5" cy="86.2" r="3.9" fill="#a9dcfa" stroke="#2d9cf0" stroke-width="1.4"/><path d="M1033.7 97L1021 105.5L1028.8 107.3L1025.3 113.5L1037.9 105.4L1030 103.6z" fill="#5e5e5e"/><path d="M1021 86.5H1040.5V99L1052.5 112.5" fill="none" stroke="#2d9cf0" stroke-width="2.6"/><path d="M1076.7 97L1064 105.5L1071.8 107.3L1068.3 113.5L1080.9 105.4L1073 103.6z" fill="#5e5e5e"/><path d="M1064 83.3H1095.5V101M1064 88.4H1091V100L1095.5 105V110.5M1064 93.5H1085.6V105.5L1093 113" fill="none" stroke="#2d9cf0" stroke-width="2.4"/><path d="M1119.7 97L1107 105.5L1114.8 107.3L1111.3 113.5L1123.9 105.4L1116 103.6z" fill="#5e5e5e"/><path d="M1107 83.2h30M1107 88.2h23.5M1107 93.2h20" fill="none" stroke="#0a8fd6" stroke-width="2.4"/><path d="M1131 89v10l5 5" fill="none" stroke="#c8324a" stroke-width="1.6"/><path d="M1125 112l11-9" stroke="#555" stroke-width="3.4"/><path d="M1193.8 83.2L1209.5 94L1204 112.3H1184L1178.3 94z" fill="#79bff2" stroke="#666" stroke-width="1.2"/><path d="M1263 86.5h9.5v6M1275 101.5l6 6" fill="none" stroke="#2d9cf0" stroke-width="2.4"/><path d="M1267 93.5l8.5 8.5M1275.5 93.5l-8.5 8.5" stroke="#e8334f" stroke-width="2.6"/><circle cx="1259.5" cy="86.5" r="3.6" fill="#f1f1f1" stroke="#555" stroke-width="1.5"/><circle cx="1282.5" cy="109.5" r="3.6" fill="#f1f1f1" stroke="#555" stroke-width="1.5"/><path d="M1322 112.6h-7.4V82.9h30.4v7.5" fill="none" stroke="#555" stroke-width="1.6"/><path d="M1325.5 113v-4l15.5-15.5h5" fill="none" stroke="#2d9cf0" stroke-width="2.4"/><rect x="1357.3" y="83" width="1.5" height="30" fill="#555"/><path d="M1363 94h7" stroke="#555" stroke-width="2"/><path d="M1369.5 89l7 5-7 5z" fill="#555"/><path d="M1376.5 82.5l9.5 11.5-9.5 19" fill="none" stroke="#2d9cf0" stroke-width="1.8"/><path d="M1400 90.8h8.8M1400 98.8h11.7M1400 106.8h15M1417 90.8h15M1420.4 98.8h11.6M1423 106.8h9" stroke="#e8334f" stroke-width="2"/><path d="M1410.3 84.3l10.5 27.8" stroke="#444" stroke-width="1.8"/><path d="M1455.7 97L1443 105.5L1450.8 107.3L1447.3 113.5L1459.9 105.4L1452 103.6z" fill="#5e5e5e"/><path d="M1454 84h9.8l5.6 5.6v12" fill="none" stroke="#e8334f" stroke-width="2.6"/><path d="M1448 88l21 20" stroke="#2d9cf0" stroke-width="2.8"/><circle cx="1447.2" cy="86.2" r="3.6" fill="#f1f1f1" stroke="#555" stroke-width="1.5"/><circle cx="1470" cy="109.5" r="3.6" fill="#f1f1f1" stroke="#555" stroke-width="1.5"/><defs><mask id="wjd" maskUnits="userSpaceOnUse" x="1490" y="75" width="60" height="45"><rect x="1490" y="75" width="60" height="45" fill="#fff"/><circle cx="1533.4" cy="88.2" r="2.3" fill="#000"/><path d="M1533.4 88.2L1542 79.8" stroke="#000" stroke-width="4.6"/></mask><mask id="wjl" maskUnits="userSpaceOnUse" x="1490" y="75" width="60" height="45"><rect x="1490" y="75" width="60" height="45" fill="#fff"/><circle cx="1533.4" cy="88.2" r="3.5" fill="#000"/><path d="M1533.4 88.2L1542 79.8" stroke="#000" stroke-width="7"/></mask></defs><g mask="url(#wjd)"><circle cx="1530.2" cy="91.4" r="8.1" fill="#555"/><path d="M1527 94.6L1510.5 110.6" stroke="#555" stroke-width="6.4" stroke-linecap="round"/></g><g mask="url(#wjl)"><circle cx="1530.2" cy="91.4" r="6.9" fill="#b9b9b9"/><path d="M1527 94.6L1510.5 110.6" stroke="#b9b9b9" stroke-width="4.2" stroke-linecap="round"/></g><circle cx="1510.6" cy="110.4" r="1.3" fill="none" stroke="#555" stroke-width=".8"/><rect x="1578" y="79" width="38" height="38" fill="#0a8fd6"/><rect x="1581.6" y="82.6" width="27.6" height="21" fill="none" stroke="#a5e08a" stroke-width="1.1" stroke-dasharray="3 2.6"/><path d="M1602 96.2v14.8l3.4-3.2 3.2 6 2.4-1.2-3.1-5.9h4.9z" fill="#fff"/></svg>
<div class="t" style="left:796px;top:145.15px;font-size:14px;color:#111;font-weight:bold;font-family:'Liberation Sans', sans-serif;letter-spacing:-0.445px;">The 2D and 3D PCB documents are out of sync.</div>
<svg style="left:1892px;top:146px;" width="12" height="12" viewBox="0 0 12 12"><path d="M1 1l10 10M11 1L1 11" stroke="#fff" stroke-width="2.2"/></svg>
<div style="left:399px;top:169px;width:1px;height:22px;background:#a9a9a9"></div>
<svg style="left:5px;top:178px;" width="12" height="8" viewBox="0 0 12 8"><path d="M0 3.5L5.5 0v7zM5.5 3.5L11 0v7z" fill="#444"/></svg>
<div class="t" style="left:25px;top:175.86px;font-size:10.8px;color:#666;font-weight:normal;font-family:'Liberation Sans', sans-serif;letter-spacing:-0.501px;">DESIGN MANAGER</div>
<svg style="left:378px;top:176px;" width="11" height="11" viewBox="0 0 11 11"><circle cx="5.5" cy="5.5" r="4.8" fill="#333"/><rect x="2.5" y="4.7" width="6" height="1.8" fill="#eee"/></svg>
<div style="left:395px;top:176px;width:1px;height:11px;background:#777"></div>
<div style="left:397px;top:178px;width:1px;height:7px;background:#777"></div>
<div class="t" style="left:15px;top:199.42px;font-size:12.5px;color:#1a8fd8;font-weight:normal;font-family:'Liberation Sans', sans-serif;letter-spacing:-0.263px;">Browser</div>
<div class="t" style="left:90px;top:199.42px;font-size:12.5px;color:#333;font-weight:normal;font-family:'Liberation Sans', sans-serif;letter-spacing:-0.296px;">Filter</div>
<div style="left:2px;top:218px;width:71px;height:3px;background:#0a8fd6"></div>
<div style="left:336px;top:193px;width:28px;height:28px;background:#cfcfcf"></div>
<div style="left:368px;top:193px;width:29px;height:28px;background:#cfcfcf"></div>
<svg style="left:336px;top:193px;" width="28" height="28" viewBox="0 0 28 28"><rect x="7.5" y="7.5" width="7" height="7" fill="none" stroke="#777" stroke-width="1"/><path d="M14 13v10l2.5-2.3 2 4.2 1.6-.8-2-4.1h3.4z" fill="#111"/></svg>
<svg style="left:368px;top:193px;" width="29" height="28" viewBox="0 0 29 28"><circle cx="11.5" cy="12" r="5.5" fill="none" stroke="#888" stroke-width="1"/><rect x="8" y="10.5" width="7" height="3" fill="#6aaee8"/><path d="M15.5 16l5 5" stroke="#444" stroke-width="1.8"/></svg>
<div class="t" style="left:10px;top:239.42px;font-size:12.5px;color:#222;font-weight:normal;font-family:'Liberation Sans', sans-serif;letter-spacing:0.033px;">View</div>
<div style="left:60px;top:232px;width:305px;height:26px;background:#fff;border:1px solid #8a8a8a"></div>
<div class="t" style="left:65px;top:239.42px;font-size:12.5px;color:#111;font-weight:normal;font-family:'Liberation Sans', sans-serif;letter-spacing:-0.351px;">Devices</div>
<svg style="left:352px;top:242px;" width="8" height="6" viewBox="0 0 8 6"><path d="M0.5 0.5h6l-3 5z" fill="#555"/></svg>
<svg style="left:370px;top:236px;" width="16" height="16" viewBox="0 0 16 16"><circle cx="8" cy="8" r="7.3" fill="none" stroke="#777" stroke-width="1"/><text x="8" y="12.6" text-anchor="middle" font-family="Liberation Sans" font-weight="bold" font-size="12" fill="#777">?</text></svg>
<div class="t" style="left:9px;top:275.59px;font-size:12.3px;color:#222;font-weight:normal;font-family:'Liberation Sans', sans-serif;letter-spacing:-0.148px;">Device Sets</div>
<div style="left:79px;top:279px;width:162px;height:1px;background:#888"></div>
<div class="t" style="left:247px;top:275.59px;font-size:12.3px;color:#222;font-weight:normal;font-family:'Liberation Sans', sans-serif;letter-spacing:0.263px;">3 of 3 shown (1 selected)</div>
<div style="left:9px;top:293px;width:328px;height:26px;background:#fff;border:1px solid #999"></div>
<svg style="left:16px;top:300px;" width="18" height="14" viewBox="0 0 18 14"><circle cx="6" cy="5.5" r="4.5" fill="none" stroke="#888" stroke-width="1.2"/><path d="M9.3 9l3 3" stroke="#888" stroke-width="1.5"/><path d="M12 11.5h4l-2 2z" fill="#111"/></svg>
<div class="t" style="left:40px;top:300.59px;font-size:12.3px;color:#8a8a8a;font-weight:normal;font-family:'Liberation Sans', sans-serif;letter-spacing:-0.495px;">Search</div>
<svg style="left:322px;top:303px;" width="8" height="6" viewBox="0 0 8 6"><path d="M0.5 0.5h6l-3 5z" fill="#555"/></svg>
<svg style="left:356px;top:303px;" width="26" height="16" viewBox="0 0 26 16"><circle cx="3.5" cy="1.8" r="1.3" fill="#444"/><circle cx="8.5" cy="1.8" r="1.3" fill="#444"/><circle cx="13.5" cy="1.8" r="1.3" fill="#444"/><path d="M18 11h6l-3 4z" fill="#444"/></svg>
<div style="left:9px;top:326px;width:382px;height:199px;background:#fff;border:1px solid #999"></div>
<div class="t" style="left:-301px;width:1000px;text-align:center;top:332.59px;font-size:12.3px;color:#111;font-weight:normal;font-family:'Liberation Sans', sans-serif;letter-spacing:-0.147px;">Device Set</div>
<svg style="left:196px;top:327px;" width="9" height="5" viewBox="0 0 9 5"><path d="M0.5 4.5l4-3.5 4 3.5" fill="none" stroke="#444" stroke-width="0.9"/></svg>
<div style="left:10px;top:349px;width:380px;height:16px;background:#0a8fd6"></div>
<div style="left:10px;top:365px;width:380px;height:16px;background:#f4f4f4"></div>
<div class="t" style="left:14px;top:351.59px;font-size:12.3px;color:#fff;font-weight:normal;font-family:'Liberation Sans', sans-serif;letter-spacing:-0.169px;">&lt;All Devices&gt;</div>
<div class="t" style="left:14px;top:367.59px;font-size:12.3px;color:#222;font-weight:normal;font-family:'Liberation Sans', sans-serif;letter-spacing:0.022px;">&lt;Bottom Side Devices&gt;</div>
<div class="t" style="left:14px;top:383.59px;font-size:12.3px;color:#222;font-weight:normal;font-family:'Liberation Sans', sans-serif;letter-spacing:0.034px;">&lt;Top Side Devices&gt;</div>
<div class="t" style="left:9px;top:537.59px;font-size:12.3px;color:#222;font-weight:normal;font-family:'Liberation Sans', sans-serif;letter-spacing:-0.392px;">Devices</div>
<div style="left:56px;top:541px;width:171px;height:1px;background:#888"></div>
<div class="t" style="left:233px;top:537.59px;font-size:12.3px;color:#222;font-weight:normal;font-family:'Liberation Sans', sans-serif;letter-spacing:0.256px;">16 of 16 shown (0 selected)</div>
<div style="left:9px;top:555px;width:328px;height:26px;background:#fff;border:1px solid #999"></div>
<svg style="left:16px;top:562px;" width="18" height="14" viewBox="0 0 18 14"><circle cx="6" cy="5.5" r="4.5" fill="none" stroke="#888" stroke-width="1.2"/><path d="M9.3 9l3 3" stroke="#888" stroke-width="1.5"/><path d="M12 11.5h4l-2 2z" fill="#111"/></svg>
<div class="t" style="left:40px;top:562.59px;font-size:12.3px;color:#8a8a8a;font-weight:normal;font-family:'Liberation Sans', sans-serif;letter-spacing:-0.495px;">Search</div>
<svg style="left:322px;top:565px;" width="8" height="6" viewBox="0 0 8 6"><path d="M0.5 0.5h6l-3 5z" fill="#555"/></svg>
<svg style="left:356px;top:565px;" width="26" height="16" viewBox="0 0 26 16"><circle cx="3.5" cy="1.8" r="1.3" fill="#444"/><circle cx="8.5" cy="1.8" r="1.3" fill="#444"/><circle cx="13.5" cy="1.8" r="1.3" fill="#444"/><path d="M18 11h6l-3 4z" fill="#444"/></svg>
<div style="left:9px;top:588px;width:382px;height:200px;background:#fff;border:1px solid #999"></div>
<div style="left:50px;top:590px;width:1px;height:21px;background:#e4e4e4"></div>
<div style="left:129px;top:590px;width:1px;height:21px;background:#e4e4e4"></div>
<div style="left:170px;top:590px;width:1px;height:21px;background:#e4e4e4"></div>
<div style="left:207px;top:590px;width:1px;height:21px;background:#e4e4e4"></div>
<div style="left:244px;top:590px;width:1px;height:21px;background:#e4e4e4"></div>
<div style="left:295px;top:590px;width:1px;height:21px;background:#e4e4e4"></div>
<div style="left:360px;top:590px;width:1px;height:21px;background:#e4e4e4"></div>
<svg style="left:27px;top:589px;" width="9" height="5" viewBox="0 0 9 5"><path d="M0.5 4.5l4-3.5 4 3.5" fill="none" stroke="#444" stroke-width="0.9"/></svg>
<div class="t" style="left:15px;top:595.59px;font-size:12.3px;color:#111;font-weight:normal;font-family:'Liberation Sans', sans-serif;letter-spacing:-0.702px;">Name</div>
<div class="t" style="left:65px;top:595.59px;font-size:12.3px;color:#111;font-weight:normal;font-family:'Liberation Sans', sans-serif;letter-spacing:0.052px;">Footprint</div>
<div class="t" style="left:135px;top:595.59px;font-size:12.3px;color:#111;font-weight:normal;font-family:'Liberation Sans', sans-serif;letter-spacing:-0.309px;">Value</div>
<div class="t" style="left:178px;top:595.59px;font-size:12.3px;color:#111;font-weight:normal;font-family:'Liberation Sans', sans-serif;letter-spacing:-0.654px;">Side</div>
<div class="t" style="left:216px;top:595.59px;font-size:12.3px;color:#111;font-weight:normal;font-family:'Liberation Sans', sans-serif;letter-spacing:-0.732px;">Pins</div>
<div class="t" style="left:251px;top:595.59px;font-size:12.3px;color:#111;font-weight:normal;font-family:'Liberation Sans', sans-serif;letter-spacing:-0.277px;">Locked</div>
<div class="t" style="left:303px;top:595.59px;font-size:12.3px;color:#111;font-weight:normal;font-family:'Liberation Sans', sans-serif;letter-spacing:-0.093px;">Pos. (mil)</div>
<div class="t" style="left:368px;top:595.59px;font-size:12.3px;color:#111;font-weight:normal;font-family:'Liberation Sans', sans-serif;letter-spacing:-0.204px;">A</div>
<div class="t" style="left:13px;top:612.59px;font-size:12.3px;color:#222;font-weight:normal;font-family:'Liberation Sans', sans-serif;letter-spacing:0.000px;">E$1</div>
<div class="t" style="left:54px;top:612.59px;font-size:12.3px;color:#222;font-weight:normal;font-family:'Liberation Sans', sans-serif;letter-spacing:0.000px;">P(R-PDIP-T8)</div>
<div class="t" style="left:175px;top:612.59px;font-size:12.3px;color:#222;font-weight:normal;font-family:'Liberation Sans', sans-serif;letter-spacing:-0.354px;">TOP</div>
<div class="t" style="left:-759px;width:1000px;text-align:right;top:612.59px;font-size:12.3px;color:#222;font-weight:normal;font-family:'Liberation Sans', sans-serif;letter-spacing:0.160px;">8</div>
<div style="left:265px;top:613px;width:12px;height:12px;background:#fff;border:1px solid #bdbdbd;border-radius:2px"></div>
<div class="t" style="left:302px;top:612.59px;font-size:12.3px;color:#222;font-weight:normal;font-family:'Liberation Sans', sans-serif;letter-spacing:0.117px;">(900 950)</div>
<div style="left:10px;top:627px;width:363px;height:16px;background:#f4f4f4"></div>
<div class="t" style="left:13px;top:628.59px;font-size:12.3px;color:#222;font-weight:normal;font-family:'Liberation Sans', sans-serif;letter-spacing:0.000px;">E$2</div>
<div class="t" style="left:54px;top:628.59px;font-size:12.3px;color:#222;font-weight:normal;font-family:'Liberation Sans', sans-serif;letter-spacing:0.000px;">1X01</div>
<div class="t" style="left:175px;top:628.59px;font-size:12.3px;color:#222;font-weight:normal;font-family:'Liberation Sans', sans-serif;letter-spacing:-0.354px;">TOP</div>
<div class="t" style="left:-759px;width:1000px;text-align:right;top:628.59px;font-size:12.3px;color:#222;font-weight:normal;font-family:'Liberation Sans', sans-serif;letter-spacing:0.160px;">1</div>
<div style="left:265px;top:629px;width:12px;height:12px;background:#fff;border:1px solid #bdbdbd;border-radius:2px"></div>
<div class="t" style="left:302px;top:628.59px;font-size:12.3px;color:#222;font-weight:normal;font-family:'Liberation Sans', sans-serif;letter-spacing:0.102px;">(1150 1...</div>
<div class="t" style="left:13px;top:644.59px;font-size:12.3px;color:#222;font-weight:normal;font-family:'Liberation Sans', sans-serif;letter-spacing:0.000px;">E$3</div>
<div class="t" style="left:54px;top:644.59px;font-size:12.3px;color:#222;font-weight:normal;font-family:'Liberation Sans', sans-serif;letter-spacing:0.000px;">1X01</div>
<div class="t" style="left:175px;top:644.59px;font-size:12.3px;color:#222;font-weight:normal;font-family:'Liberation Sans', sans-serif;letter-spacing:-0.354px;">TOP</div>
<div class="t" style="left:-759px;width:1000px;text-align:right;top:644.59px;font-size:12.3px;color:#222;font-weight:normal;font-family:'Liberation Sans', sans-serif;letter-spacing:0.160px;">1</div>
<div style="left:265px;top:645px;width:12px;height:12px;background:#fff;border:1px solid #bdbdbd;border-radius:2px"></div>
<div class="t" style="left:302px;top:644.59px;font-size:12.3px;color:#222;font-weight:normal;font-family:'Liberation Sans', sans-serif;letter-spacing:0.102px;">(1150 1...</div>
<div style="left:10px;top:659px;width:363px;height:16px;background:#f4f4f4"></div>
<div class="t" style="left:13px;top:660.59px;font-size:12.3px;color:#222;font-weight:normal;font-family:'Liberation Sans', sans-serif;letter-spacing:0.000px;">E$4</div>
<div class="t" style="left:54px;top:660.59px;font-size:12.3px;color:#222;font-weight:normal;font-family:'Liberation Sans', sans-serif;letter-spacing:0.000px;">1X01</div>
<div class="t" style="left:175px;top:660.59px;font-size:12.3px;color:#222;font-weight:normal;font-family:'Liberation Sans', sans-serif;letter-spacing:-0.354px;">TOP</div>
<div class="t" style="left:-759px;width:1000px;text-align:right;top:660.59px;font-size:12.3px;color:#222;font-weight:normal;font-family:'Liberation Sans', sans-serif;letter-spacing:0.160px;">1</div>
<div style="left:265px;top:661px;width:12px;height:12px;background:#fff;border:1px solid #bdbdbd;border-radius:2px"></div>
<div class="t" style="left:302px;top:660.59px;font-size:12.3px;color:#222;font-weight:normal;font-family:'Liberation Sans', sans-serif;letter-spacing:0.102px;">(1150 9...</div>
<div class="t" style="left:13px;top:676.59px;font-size:12.3px;color:#222;font-weight:normal;font-family:'Liberation Sans', sans-serif;letter-spacing:0.000px;">E$5</div>
<div class="t" style="left:54px;top:676.59px;font-size:12.3px;color:#222;font-weight:normal;font-family:'Liberation Sans', sans-serif;letter-spacing:0.000px;">1X01</div>
<div class="t" style="left:175px;top:676.59px;font-size:12.3px;color:#222;font-weight:normal;font-family:'Liberation Sans', sans-serif;letter-spacing:-0.354px;">TOP</div>
<div class="t" style="left:-759px;width:1000px;text-align:right;top:676.59px;font-size:12.3px;color:#222;font-weight:normal;font-family:'Liberation Sans', sans-serif;letter-spacing:0.160px;">1</div>
<div style="left:265px;top:677px;width:12px;height:12px;background:#fff;border:1px solid #bdbdbd;border-radius:2px"></div>
<div class="t" style="left:302px;top:676.59px;font-size:12.3px;color:#222;font-weight:normal;font-family:'Liberation Sans', sans-serif;letter-spacing:0.104px;">(1275 1...</div>
<div style="left:10px;top:691px;width:363px;height:16px;background:#f4f4f4"></div>
<div class="t" style="left:13px;top:692.59px;font-size:12.3px;color:#222;font-weight:normal;font-family:'Liberation Sans', sans-serif;letter-spacing:0.000px;">E$6</div>
<div class="t" style="left:54px;top:692.59px;font-size:12.3px;color:#222;font-weight:normal;font-family:'Liberation Sans', sans-serif;letter-spacing:0.000px;">1X01</div>
<div class="t" style="left:175px;top:692.59px;font-size:12.3px;color:#222;font-weight:normal;font-family:'Liberation Sans', sans-serif;letter-spacing:-0.354px;">TOP</div>
<div class="t" style="left:-759px;width:1000px;text-align:right;top:692.59px;font-size:12.3px;color:#222;font-weight:normal;font-family:'Liberation Sans', sans-serif;letter-spacing:0.160px;">1</div>
<div style="left:265px;top:693px;width:12px;height:12px;background:#fff;border:1px solid #bdbdbd;border-radius:2px"></div>
<div class="t" style="left:302px;top:692.59px;font-size:12.3px;color:#222;font-weight:normal;font-family:'Liberation Sans', sans-serif;letter-spacing:0.104px;">(1275 1...</div>
<div class="t" style="left:13px;top:708.59px;font-size:12.3px;color:#222;font-weight:normal;font-family:'Liberation Sans', sans-serif;letter-spacing:0.000px;">E$7</div>
<div class="t" style="left:54px;top:708.59px;font-size:12.3px;color:#222;font-weight:normal;font-family:'Liberation Sans', sans-serif;letter-spacing:0.000px;">1X01</div>
<div class="t" style="left:175px;top:708.59px;font-size:12.3px;color:#222;font-weight:normal;font-family:'Liberation Sans', sans-serif;letter-spacing:-0.354px;">TOP</div>
<div class="t" style="left:-759px;width:1000px;text-align:right;top:708.59px;font-size:12.3px;color:#222;font-weight:normal;font-family:'Liberation Sans', sans-serif;letter-spacing:0.160px;">1</div>
<div style="left:265px;top:709px;width:12px;height:12px;background:#fff;border:1px solid #bdbdbd;border-radius:2px"></div>
<div class="t" style="left:302px;top:708.59px;font-size:12.3px;color:#222;font-weight:normal;font-family:'Liberation Sans', sans-serif;letter-spacing:0.104px;">(1275 9...</div>
<div style="left:10px;top:723px;width:363px;height:16px;background:#f4f4f4"></div>
<div class="t" style="left:13px;top:724.59px;font-size:12.3px;color:#222;font-weight:normal;font-family:'Liberation Sans', sans-serif;letter-spacing:0.000px;">E$8</div>
<div class="t" style="left:54px;top:724.59px;font-size:12.3px;color:#222;font-weight:normal;font-family:'Liberation Sans', sans-serif;letter-spacing:0.000px;">1X01</div>
<div class="t" style="left:175px;top:724.59px;font-size:12.3px;color:#222;font-weight:normal;font-family:'Liberation Sans', sans-serif;letter-spacing:-0.354px;">TOP</div>
<div class="t" style="left:-759px;width:1000px;text-align:right;top:724.59px;font-size:12.3px;color:#222;font-weight:normal;font-family:'Liberation Sans', sans-serif;letter-spacing:0.160px;">1</div>
<div style="left:265px;top:725px;width:12px;height:12px;background:#fff;border:1px solid #bdbdbd;border-radius:2px"></div>
<div class="t" style="left:302px;top:724.59px;font-size:12.3px;color:#222;font-weight:normal;font-family:'Liberation Sans', sans-serif;letter-spacing:0.104px;">(1400 1...</div>
<div class="t" style="left:13px;top:740.59px;font-size:12.3px;color:#222;font-weight:normal;font-family:'Liberation Sans', sans-serif;letter-spacing:0.000px;">E$9</div>
<div class="t" style="left:54px;top:740.59px;font-size:12.3px;color:#222;font-weight:normal;font-family:'Liberation Sans', sans-serif;letter-spacing:0.000px;">1X01</div>
<div class="t" style="left:175px;top:740.59px;font-size:12.3px;color:#222;font-weight:normal;font-family:'Liberation Sans', sans-serif;letter-spacing:-0.354px;">TOP</div>
<div class="t" style="left:-759px;width:1000px;text-align:right;top:740.59px;font-size:12.3px;color:#222;font-weight:normal;font-family:'Liberation Sans', sans-serif;letter-spacing:0.160px;">1</div>
<div style="left:265px;top:741px;width:12px;height:12px;background:#fff;border:1px solid #bdbdbd;border-radius:2px"></div>
<div class="t" style="left:302px;top:740.59px;font-size:12.3px;color:#222;font-weight:normal;font-family:'Liberation Sans', sans-serif;letter-spacing:0.104px;">(1400 1...</div>
<div style="left:10px;top:755px;width:363px;height:16px;background:#f4f4f4"></div>
<div class="t" style="left:13px;top:756.59px;font-size:12.3px;color:#222;font-weight:normal;font-family:'Liberation Sans', sans-serif;letter-spacing:0.000px;">E$10</div>
<div class="t" style="left:54px;top:756.59px;font-size:12.3px;color:#222;font-weight:normal;font-family:'Liberation Sans', sans-serif;letter-spacing:0.000px;">1X01</div>
<div class="t" style="left:175px;top:756.59px;font-size:12.3px;color:#222;font-weight:normal;font-family:'Liberation Sans', sans-serif;letter-spacing:-0.354px;">TOP</div>
<div class="t" style="left:-759px;width:1000px;text-align:right;top:756.59px;font-size:12.3px;color:#222;font-weight:normal;font-family:'Liberation Sans', sans-serif;letter-spacing:0.160px;">1</div>
<div style="left:265px;top:757px;width:12px;height:12px;background:#fff;border:1px solid #bdbdbd;border-radius:2px"></div>
<div class="t" style="left:302px;top:756.59px;font-size:12.3px;color:#222;font-weight:normal;font-family:'Liberation Sans', sans-serif;letter-spacing:0.104px;">(1400 9...</div>
<div style="left:373px;top:589px;width:17px;height:186px;background:repeating-conic-gradient(#e6e6e6 0% 25%, #fafafa 0% 50%) 0 0/2px 2px"></div>
<div style="left:379px;top:590px;width:6px;height:111px;background:#9a9a9a;border-radius:3px"></div>
<div style="left:10px;top:773px;width:363px;height:14px;background:repeating-conic-gradient(#e6e6e6 0% 25%, #fafafa 0% 50%) 0 0/2px 2px"></div>
<div style="left:10px;top:775px;width:337px;height:7px;background:#9a9a9a;border-radius:3.5px"></div>
<div class="t" style="left:9px;top:800.59px;font-size:12.3px;color:#222;font-weight:normal;font-family:'Liberation Sans', sans-serif;letter-spacing:0.186px;">Items</div>
<div style="left:46px;top:804px;width:195px;height:1px;background:#888"></div>
<div class="t" style="left:247px;top:800.59px;font-size:12.3px;color:#222;font-weight:normal;font-family:'Liberation Sans', sans-serif;letter-spacing:0.263px;">0 of 0 shown (0 selected)</div>
<div style="left:9px;top:818px;width:328px;height:26px;background:#fff;border:1px solid #999"></div>
<svg style="left:16px;top:825px;" width="18" height="14" viewBox="0 0 18 14"><circle cx="6" cy="5.5" r="4.5" fill="none" stroke="#888" stroke-width="1.2"/><path d="M9.3 9l3 3" stroke="#888" stroke-width="1.5"/><path d="M12 11.5h4l-2 2z" fill="#111"/></svg>
<div class="t" style="left:40px;top:825.59px;font-size:12.3px;color:#8a8a8a;font-weight:normal;font-family:'Liberation Sans', sans-serif;letter-spacing:-0.495px;">Search</div>
<svg style="left:322px;top:828px;" width="8" height="6" viewBox="0 0 8 6"><path d="M0.5 0.5h6l-3 5z" fill="#555"/></svg>
<svg style="left:356px;top:828px;" width="26" height="16" viewBox="0 0 26 16"><circle cx="3.5" cy="1.8" r="1.3" fill="#444"/><circle cx="8.5" cy="1.8" r="1.3" fill="#444"/><circle cx="13.5" cy="1.8" r="1.3" fill="#444"/><path d="M18 11h6l-3 4z" fill="#444"/></svg>
<div style="left:9px;top:851px;width:382px;height:199px;background:#fff;border:1px solid #999"></div>
<div style="left:109px;top:852px;width:1px;height:22px;background:#e4e4e4"></div>
<div style="left:209px;top:852px;width:1px;height:22px;background:#e4e4e4"></div>
<div style="left:309px;top:852px;width:1px;height:22px;background:#e4e4e4"></div>
<svg style="left:56px;top:852px;" width="9" height="5" viewBox="0 0 9 5"><path d="M0.5 4.5l4-3.5 4 3.5" fill="none" stroke="#444" stroke-width="0.9"/></svg>
<div class="t" style="left:-440px;width:1000px;text-align:center;top:857.59px;font-size:12.3px;color:#111;font-weight:normal;font-family:'Liberation Sans', sans-serif;letter-spacing:-0.166px;">Type</div>
<div class="t" style="left:-341px;width:1000px;text-align:center;top:857.59px;font-size:12.3px;color:#111;font-weight:normal;font-family:'Liberation Sans', sans-serif;letter-spacing:-0.702px;">Name</div>
<div class="t" style="left:-241px;width:1000px;text-align:center;top:857.59px;font-size:12.3px;color:#111;font-weight:normal;font-family:'Liberation Sans', sans-serif;letter-spacing:-0.532px;">Signal</div>
<div class="t" style="left:-141px;width:1000px;text-align:center;top:857.59px;font-size:12.3px;color:#111;font-weight:normal;font-family:'Liberation Sans', sans-serif;letter-spacing:-0.353px;">Layer</div>
<div style="left:10px;top:1034px;width:380px;height:14px;background:repeating-conic-gradient(#e6e6e6 0% 25%, #fafafa 0% 50%) 0 0/2px 2px"></div>
<div style="left:10px;top:1037px;width:180px;height:7px;background:#9a9a9a;border-radius:3.5px"></div>
<div class="t" style="left:12px;top:1058.00px;font-size:13px;color:#111;font-weight:normal;font-family:'Liberation Mono', monospace;letter-spacing:0.198px;">Left-click &amp; drag to define group</div>
<div style="left:408px;top:173px;width:194px;height:26px;background:#fff;border:1px solid #8a8a8a"></div>
<div style="left:413px;top:176px;width:20px;height:20px;background:#dc3f5c"></div>
<div class="t" style="left:440px;top:181.22px;font-size:12.5px;color:#111;font-weight:normal;font-family:'Liberation Sans', sans-serif;letter-spacing:-0.470px;">1  Top</div>
<svg style="left:589px;top:183px;" width="8" height="6" viewBox="0 0 8 6"><path d="M0.5 0.5h6l-3 5z" fill="#555"/></svg>
<div class="t" style="left:621px;top:181.22px;font-size:12.5px;color:#222;font-weight:normal;font-family:'Liberation Sans', sans-serif;letter-spacing:0.202px;">25 mil (1112 1541)</div>
<div style="left:755px;top:173px;width:761px;height:26px;background:#f1f1f1;border:1px solid #8a8a8a"></div>
<div class="t" style="left:762px;top:181.22px;font-size:12.5px;color:#8a8a8a;font-weight:normal;font-family:'Liberation Sans', sans-serif;letter-spacing:-0.198px;">Click or press Slash to activate command line mode</div>
<svg style="left:1503px;top:183px;" width="8" height="6" viewBox="0 0 8 6"><path d="M0.5 0.5h6l-3 5z" fill="#555"/></svg>
<div style="left:400px;top:1033px;width:1104px;height:17px;background:repeating-conic-gradient(#dadada 0% 25%, #f6f6f6 0% 50%) 0 0/2px 2px"></div>
<div style="left:400px;top:1033px;width:643px;height:17px;background:#c9c9c9"></div>
<div style="left:405px;top:1038px;width:638px;height:7px;background:#9a9a9a;border-radius:3.5px"></div>
<div style="left:1504px;top:203px;width:16px;height:847px;background:repeating-conic-gradient(#dadada 0% 25%, #f6f6f6 0% 50%) 0 0/2px 2px"></div>
<div style="left:1504px;top:465px;width:16px;height:562px;background:#c9c9c9"></div>
<div style="left:1509px;top:465px;width:6px;height:562px;background:#9a9a9a;border-radius:3px"></div>
<div style="left:1504px;top:1033px;width:16px;height:17px;background:#c9c9c9"></div>
<div style="left:1520px;top:169px;width:1px;height:22px;background:#a9a9a9"></div>
<div style="left:1522px;top:176px;width:1px;height:11px;background:#777"></div>
<div style="left:1524px;top:178px;width:1px;height:7px;background:#777"></div>
<svg style="left:1531px;top:176px;" width="11" height="11" viewBox="0 0 11 11"><circle cx="5.5" cy="5.5" r="4.8" fill="#333"/><rect x="2.5" y="4.7" width="6" height="1.8" fill="#eee"/></svg>
<div class="t" style="left:1545px;top:175.86px;font-size:10.8px;color:#666;font-weight:normal;font-family:'Liberation Sans', sans-serif;letter-spacing:-0.757px;">INSPECTOR</div>
<svg style="left:1903px;top:178px;" width="11" height="8" viewBox="0 0 11 8"><path d="M0 0l5 3.5L0 7zM5.5 0l5 3.5-5 3.5z" fill="#444"/></svg>
<div class="t" style="left:1220.5px;width:1000px;text-align:center;top:200.74px;font-size:13.3px;color:#111;font-weight:bold;font-family:'Liberation Sans', sans-serif;letter-spacing:-0.226px;">Nothing Selected</div>
<div style="left:1521px;top:223px;width:399px;height:24px;background:#f6f6f6"></div>
<div style="left:1522px;top:223px;width:24px;height:24px;background:#0a8fd6;border-radius:2px"></div>
<svg style="left:1529px;top:231px;" width="11" height="7" viewBox="0 0 11 7"><path d="M0.5 0.5h10l-5 6z" fill="#111"/></svg>
<div class="t" style="left:1548px;top:228.74px;font-size:13.3px;color:#111;font-weight:bold;font-family:'Liberation Sans', sans-serif;letter-spacing:0.161px;">Board Information</div>
<div class="t" style="left:1524px;top:255.00px;font-size:13px;color:#333;font-weight:bold;font-family:'Liberation Sans', sans-serif;letter-spacing:0.232px;">Dimensions</div>
<div class="t" style="left:1640px;top:256.27px;font-size:11.5px;color:#222;font-weight:normal;font-family:'Liberation Sans', sans-serif;letter-spacing:-0.109px;">Width:</div>
<div class="t" style="left:1720px;top:256.27px;font-size:11.5px;color:#222;font-weight:normal;font-family:'Liberation Sans', sans-serif;letter-spacing:-0.128px;">100.1524 mm</div>
<div class="t" style="left:1640px;top:278.27px;font-size:11.5px;color:#222;font-weight:normal;font-family:'Liberation Sans', sans-serif;letter-spacing:-0.104px;">Height:</div>
<div class="t" style="left:1720px;top:278.27px;font-size:11.5px;color:#222;font-weight:normal;font-family:'Liberation Sans', sans-serif;letter-spacing:-0.128px;">50.1524 mm</div>
<div class="t" style="left:1524px;top:321.00px;font-size:13px;color:#333;font-weight:bold;font-family:'Liberation Sans', sans-serif;letter-spacing:0.525px;">Elements</div>
<div class="t" style="left:1640px;top:322.27px;font-size:11.5px;color:#222;font-weight:normal;font-family:'Liberation Sans', sans-serif;letter-spacing:-0.092px;">Total:</div>
<div class="t" style="left:1720px;top:322.27px;font-size:11.5px;color:#222;font-weight:normal;font-family:'Liberation Sans', sans-serif;letter-spacing:-0.128px;">16</div>
<div class="t" style="left:1640px;top:344.27px;font-size:11.5px;color:#222;font-weight:normal;font-family:'Liberation Sans', sans-serif;letter-spacing:-0.109px;">Top:</div>
<div class="t" style="left:1720px;top:344.27px;font-size:11.5px;color:#222;font-weight:normal;font-family:'Liberation Sans', sans-serif;letter-spacing:-0.128px;">16</div>
<div class="t" style="left:1640px;top:366.27px;font-size:11.5px;color:#222;font-weight:normal;font-family:'Liberation Sans', sans-serif;letter-spacing:-0.113px;">Bottom:</div>
<div class="t" style="left:1720px;top:366.27px;font-size:11.5px;color:#222;font-weight:normal;font-family:'Liberation Sans', sans-serif;letter-spacing:-0.128px;">0</div>
<div class="t" style="left:1524px;top:409.00px;font-size:13px;color:#333;font-weight:bold;font-family:'Liberation Sans', sans-serif;letter-spacing:0.395px;">Signals</div>
<div class="t" style="left:1640px;top:410.27px;font-size:11.5px;color:#222;font-weight:normal;font-family:'Liberation Sans', sans-serif;letter-spacing:-0.092px;">Total:</div>
<div class="t" style="left:1720px;top:410.27px;font-size:11.5px;color:#222;font-weight:normal;font-family:'Liberation Sans', sans-serif;letter-spacing:-0.128px;">7</div>
<div class="t" style="left:1640px;top:432.27px;font-size:11.5px;color:#222;font-weight:normal;font-family:'Liberation Sans', sans-serif;letter-spacing:-0.098px;">Airwires:</div>
<div class="t" style="left:1720px;top:432.27px;font-size:11.5px;color:#222;font-weight:normal;font-family:'Liberation Sans', sans-serif;letter-spacing:-0.128px;">0</div>
<div class="t" style="left:1524px;top:475.00px;font-size:13px;color:#333;font-weight:bold;font-family:'Liberation Sans', sans-serif;letter-spacing:0.686px;">Primitives</div>
<div class="t" style="left:1640px;top:476.27px;font-size:11.5px;color:#222;font-weight:normal;font-family:'Liberation Sans', sans-serif;letter-spacing:-0.118px;">Pads:</div>
<div class="t" style="left:1720px;top:476.27px;font-size:11.5px;color:#222;font-weight:normal;font-family:'Liberation Sans', sans-serif;letter-spacing:-0.128px;">23</div>
<div class="t" style="left:1640px;top:498.27px;font-size:11.5px;color:#222;font-weight:normal;font-family:'Liberation Sans', sans-serif;letter-spacing:-0.101px;">Vias:</div>
<div class="t" style="left:1720px;top:498.27px;font-size:11.5px;color:#222;font-weight:normal;font-family:'Liberation Sans', sans-serif;letter-spacing:-0.128px;">0</div>
<div class="t" style="left:1640px;top:520.27px;font-size:11.5px;color:#222;font-weight:normal;font-family:'Liberation Sans', sans-serif;letter-spacing:-0.109px;">Holes:</div>
<div class="t" style="left:1720px;top:520.27px;font-size:11.5px;color:#222;font-weight:normal;font-family:'Liberation Sans', sans-serif;letter-spacing:-0.128px;">0</div>
<div class="t" style="left:1640px;top:542.27px;font-size:11.5px;color:#222;font-weight:normal;font-family:'Liberation Sans', sans-serif;letter-spacing:-0.114px;">Copper Pours:</div>
<div class="t" style="left:1720px;top:542.27px;font-size:11.5px;color:#222;font-weight:normal;font-family:'Liberation Sans', sans-serif;letter-spacing:-0.128px;">0</div>
<div style="left:1522px;top:616px;width:1px;height:11px;background:#777"></div>
<div style="left:1524px;top:618px;width:1px;height:7px;background:#777"></div>
<svg style="left:1531px;top:617px;" width="11" height="11" viewBox="0 0 11 11"><circle cx="5.5" cy="5.5" r="4.8" fill="#333"/><rect x="2.5" y="4.7" width="6" height="1.8" fill="#eee"/></svg>
<div class="t" style="left:1545px;top:616.86px;font-size:10.8px;color:#666;font-weight:normal;font-family:'Liberation Sans', sans-serif;letter-spacing:-0.663px;">SELECTION FILTER</div>
<div style="left:1520px;top:632px;width:400px;height:172px;background:#f1f1f1;border:1px solid #9a9a9a;border-right:none"></div>
<div class="t" style="left:1522px;top:634.42px;font-size:12.5px;color:#111;font-weight:normal;font-family:'Liberation Sans', sans-serif;letter-spacing:-0.270px;">Types</div>
<div style="left:1521px;top:653px;width:381px;height:150px;background:#0a93d8"></div>
<div style="left:1902px;top:653px;width:17px;height:150px;background:#f4f4f4"></div>
<div style="left:1907px;top:654px;width:6px;height:69px;background:#9a9a9a;border-radius:0 0 3px 3px"></div>
<div style="left:1918px;top:632px;width:1px;height:172px;background:#8a8a8a"></div>
<div class="t" style="left:1547px;top:659.22px;font-size:12.5px;color:#fff;font-weight:normal;font-family:'Liberation Sans', sans-serif;letter-spacing:-0.164px;">Airwire</div>
<div class="t" style="left:1547px;top:679.22px;font-size:12.5px;color:#fff;font-weight:normal;font-family:'Liberation Sans', sans-serif;letter-spacing:-0.155px;">Attribute</div>
<div class="t" style="left:1547px;top:699.22px;font-size:12.5px;color:#fff;font-weight:normal;font-family:'Liberation Sans', sans-serif;letter-spacing:-0.160px;">Circle</div>
<div class="t" style="left:1547px;top:719.22px;font-size:12.5px;color:#fff;font-weight:normal;font-family:'Liberation Sans', sans-serif;letter-spacing:-0.191px;">Device</div>
<div class="t" style="left:1547px;top:739.22px;font-size:12.5px;color:#fff;font-weight:normal;font-family:'Liberation Sans', sans-serif;letter-spacing:-0.197px;">Dimension</div>
<div class="t" style="left:1547px;top:759.22px;font-size:12.5px;color:#fff;font-weight:normal;font-family:'Liberation Sans', sans-serif;letter-spacing:-0.217px;">Frame</div>
<div class="t" style="left:1547px;top:779.22px;font-size:12.5px;color:#fff;font-weight:normal;font-family:'Liberation Sans', sans-serif;letter-spacing:-0.208px;">Group</div>
<div style="left:1521px;top:803px;width:381px;height:1px;background:#9a9a9a"></div>
<svg style="left:0px;top:0px;pointer-events:none" width="1920" height="810" viewBox="0 0 1920 810"><g fill="none" stroke="#6a8cc0" stroke-width=".8"><circle cx="1527" cy="658.8" r="1.8"/><circle cx="1538" cy="658.8" r="1.8"/><circle cx="1538" cy="669.8" r="1.8"/></g><path d="M1529.5 658.8h6M1538 661.5v6" stroke="#3a78c8" stroke-width=".8" stroke-dasharray="1 1.5"/><path d="M1525.3 676.8L1532.6 677L1540.6 684.6L1533.7 691.3L1525.6 683.8z" fill="none" stroke="#4b78b0" stroke-width="1"/><rect x="1527.6" y="678.9" width="2" height="2" fill="none" stroke="#4b78b0" stroke-width=".7"/><path d="M1530 684l4-4M1532 686l4-4M1534 688l3-3" stroke="#4b78b0" stroke-width=".6"/><circle cx="1533" cy="703.9" r="7.3" fill="#b9d6f2" stroke="#2f3478" stroke-width="1"/><path d="M1527 717.5h12l2 5.5h-16z" fill="#7f9cc0"/><rect x="1525" y="723" width="16" height="4" fill="#e8f0f8"/><rect x="1526.0" y="723.5" width="1" height="3" fill="#345"/><rect x="1528.6" y="723.5" width="1" height="3" fill="#345"/><rect x="1531.2" y="723.5" width="1" height="3" fill="#345"/><rect x="1533.8" y="723.5" width="1" height="3" fill="#345"/><rect x="1536.4" y="723.5" width="1" height="3" fill="#345"/><rect x="1539.0" y="723.5" width="1" height="3" fill="#345"/><rect x="1525" y="727" width="16" height="1" fill="#c9a860"/><path d="M1525.5 736v16M1540.5 736v16" stroke="#8f96b0" stroke-width="1"/><path d="M1527.5 740h11" stroke="#222a3a" stroke-width="1.2"/><path d="M1527 740l2.5-2v4zM1539 740l-2.5-2v4z" fill="#222a3a"/><rect x="1525.5" y="756.5" width="15" height="15" fill="#7b9cc2" stroke="#1e2a3c" stroke-width="1"/><rect x="1529" y="760" width="8" height="8" fill="#0a93d8"/><rect x="1526" y="777" width="14" height="14" fill="#b8dcf6" stroke="#5a7fb0" stroke-width=".8" stroke-dasharray="1.5 1"/><rect x="1530.5" y="779" width="5" height="4.5" rx="1" fill="none" stroke="#4b8ad0" stroke-width=".8"/><circle cx="1533" cy="787" r="2.3" fill="none" stroke="#4b8ad0" stroke-width=".8"/><rect x="1525" y="796" width="16" height="7" fill="#b8dcf6"/><ellipse cx="1533" cy="802" rx="4.5" ry="3" fill="#3a4a90"/></svg>
<div class="t" style="left:1521px;top:809.42px;font-size:12.5px;color:#111;font-weight:normal;font-family:'Liberation Sans', sans-serif;letter-spacing:-0.586px;">Layers</div>
<div style="left:1520px;top:828px;width:400px;height:80px;background:#fff;border:1px solid #9a9a9a;border-right:none"></div>
<div style="left:1521px;top:845px;width:399px;height:16px;background:#f4f4f4"></div>
<div style="left:1521px;top:877px;width:399px;height:16px;background:#f4f4f4"></div>
<div class="t" style="left:1525px;top:830.59px;font-size:12.3px;color:#222;font-weight:normal;font-family:'Liberation Sans', sans-serif;">&lt;All&gt;</div>
<div class="t" style="left:1525px;top:846.59px;font-size:12.3px;color:#222;font-weight:normal;font-family:'Liberation Sans', sans-serif;">&lt;Preset_Bottom&gt;</div>
<div class="t" style="left:1525px;top:862.59px;font-size:12.3px;color:#222;font-weight:normal;font-family:'Liberation Sans', sans-serif;">&lt;Preset_Standard&gt;</div>
<div class="t" style="left:1525px;top:878.59px;font-size:12.3px;color:#222;font-weight:normal;font-family:'Liberation Sans', sans-serif;">&lt;Preset_Top&gt;</div>
<div style="left:1521px;top:913px;width:381px;height:107px;background:#0a93d8"></div>
<div style="left:1902px;top:913px;width:17px;height:107px;background:#f4f4f4"></div>
<div style="left:1906px;top:914px;width:6px;height:30px;background:#9a9a9a;border-radius:0 0 3px 3px"></div>
<div style="left:1918px;top:828px;width:1px;height:222px;background:#8a8a8a"></div>
<div style="left:1525px;top:916px;width:16px;height:16px;background:#a0447a"></div>
<div class="t" style="left:1547px;top:919.42px;font-size:12.5px;color:#fff;font-weight:normal;font-family:'Liberation Sans', sans-serif;letter-spacing:0.169px;">1  Top</div>
<div style="left:1525px;top:936px;width:16px;height:16px;background:#2a74c0"></div>
<div class="t" style="left:1547px;top:939.42px;font-size:12.5px;color:#fff;font-weight:normal;font-family:'Liberation Sans', sans-serif;letter-spacing:0.190px;">16 Bottom</div>
<div style="left:1525px;top:956px;width:16px;height:16px;background:#3a9e8c"></div>
<div class="t" style="left:1547px;top:959.42px;font-size:12.5px;color:#fff;font-weight:normal;font-family:'Liberation Sans', sans-serif;letter-spacing:0.197px;">17 Pads</div>
<div style="left:1525px;top:976px;width:16px;height:16px;background:#3a9e8c"></div>
<div class="t" style="left:1547px;top:979.42px;font-size:12.5px;color:#fff;font-weight:normal;font-family:'Liberation Sans', sans-serif;letter-spacing:0.178px;">18 Vias</div>
<div style="left:1525px;top:996px;width:16px;height:16px;background:#7e9ac8"></div>
<div class="t" style="left:1547px;top:999.42px;font-size:12.5px;color:#fff;font-weight:normal;font-family:'Liberation Sans', sans-serif;letter-spacing:0.188px;">19 Unrouted</div>
<div style="left:1525px;top:1016px;width:16px;height:4px;background:#3a9e8c"></div>
<div style="left:1520px;top:912px;width:400px;height:1px;background:#9a9a9a"></div>
<div style="left:1520px;top:912px;width:1px;height:108px;background:#9a9a9a"></div>
<div style="left:1520px;top:1020px;width:400px;height:30px;background:#f1f1f1;border-left:1px solid #9a9a9a;border-bottom:1px solid #9a9a9a"></div>
<div style="left:1870px;top:1023px;width:49px;height:25px;background:#fff;border:1px solid #aaa;border-radius:3px"></div>
<div class="t" style="left:1879px;top:1030.42px;font-size:12.5px;color:#111;font-weight:normal;font-family:'Liberation Sans', sans-serif;letter-spacing:-0.330px;">Reset</div>
<svg style="left:0px;top:0px;pointer-events:none" width="1920" height="1080" viewBox="0 0 1920 1080"><rect x="760.5" y="587.5" width="69" height="105.5" fill="none" stroke="#c4c4c4" stroke-width="2"/><path d="M722.5 613.3L735.9 613.3L742.9 620.3L742.9 633.7L735.9 640.7L722.5 640.7L715.5 633.7L715.5 620.3z" fill="none" stroke="#c4c4c4" stroke-width="2"/><path d="M722.5 640.5L735.9 640.5L742.9 647.5L742.9 660.9L735.9 667.9L722.5 667.9L715.5 660.9L715.5 647.5z" fill="none" stroke="#c4c4c4" stroke-width="2"/><path d="M854.0 582.1L866.8 582.1L873.7 589.0L873.7 601.8L866.8 608.7L854.0 608.7L847.1 601.8L847.1 589.0z" fill="none" stroke="#c4c4c4" stroke-width="2"/><path d="M854.0 608.1L866.8 608.1L873.7 615.0L873.7 627.8L866.8 634.7L854.0 634.7L847.1 627.8L847.1 615.0z" fill="none" stroke="#c4c4c4" stroke-width="2"/><path d="M854.0 634.0L866.8 634.0L873.7 640.9L873.7 653.7L866.8 660.6L854.0 660.6L847.1 653.7L847.1 640.9z" fill="none" stroke="#c4c4c4" stroke-width="2"/><path d="M886.8 582.1L899.6 582.1L906.5 589.0L906.5 601.8L899.6 608.7L886.8 608.7L879.9 601.8L879.9 589.0z" fill="none" stroke="#c4c4c4" stroke-width="2"/><path d="M886.8 608.1L899.6 608.1L906.5 615.0L906.5 627.8L899.6 634.7L886.8 634.7L879.9 627.8L879.9 615.0z" fill="none" stroke="#c4c4c4" stroke-width="2"/><path d="M886.8 634.0L899.6 634.0L906.5 640.9L906.5 653.7L899.6 660.6L886.8 660.6L879.9 653.7L879.9 640.9z" fill="none" stroke="#c4c4c4" stroke-width="2"/><path d="M918.9 582.1L931.7 582.1L938.6 589.0L938.6 601.8L931.7 608.7L918.9 608.7L912.0 601.8L912.0 589.0z" fill="none" stroke="#c4c4c4" stroke-width="2"/><path d="M918.9 608.1L931.7 608.1L938.6 615.0L938.6 627.8L931.7 634.7L918.9 634.7L912.0 627.8L912.0 615.0z" fill="none" stroke="#c4c4c4" stroke-width="2"/><path d="M918.9 634.0L931.7 634.0L938.6 640.9L938.6 653.7L931.7 660.6L918.9 660.6L912.0 653.7L912.0 640.9z" fill="none" stroke="#c4c4c4" stroke-width="2"/><path d="M854.0 666.8L866.8 666.8L873.7 673.7L873.7 686.5L866.8 693.4L854.0 693.4L847.1 686.5L847.1 673.7z" fill="none" stroke="#c4c4c4" stroke-width="2"/><path d="M880.0 666.8L892.8 666.8L899.7 673.7L899.7 686.5L892.8 693.4L880.0 693.4L873.1 686.5L873.1 673.7z" fill="none" stroke="#c4c4c4" stroke-width="2"/><path d="M905.9 666.8L918.7 666.8L925.6 673.7L925.6 686.5L918.7 693.4L905.9 693.4L899.0 686.5L899.0 673.7z" fill="none" stroke="#c4c4c4" stroke-width="2"/><path d="M925.7 666.8L938.5 666.8L945.4 673.7L945.4 686.5L938.5 693.4L925.7 693.4L918.8 686.5L918.8 673.7z" fill="none" stroke="#c4c4c4" stroke-width="2"/><path transform="translate(846.60 564.40) scale(1.15 0.958)" d="M8 0H0V12H8M0 6H6" fill="none" stroke="#c6c6c6" stroke-width="1.2" vector-effect="non-scaling-stroke"/><path transform="translate(857.50 564.40) scale(1.15 0.958)" d="M7.4 2.2L6 0.6H2L0.6 2V4.4L2 5.8H6L7.4 7.2V10L6 11.4H2L0.6 10M4 -1.2V13.2" fill="none" stroke="#c6c6c6" stroke-width="1.2" vector-effect="non-scaling-stroke"/><path transform="translate(868.40 564.40) scale(1.15 0.958)" d="M0.6 2L2.2 0.4H5.8L7.4 2V4.6L0.6 11.6V12H7.6" fill="none" stroke="#c6c6c6" stroke-width="1.2" vector-effect="non-scaling-stroke"/><path d="M841.1 575.9h11.0M846.6 570.4v11.0" stroke="#bdbdbd" stroke-width="1"/><path transform="translate(846.60 590.40) scale(1.15 0.958)" d="M8 0H0V12H8M0 6H6" fill="none" stroke="#c6c6c6" stroke-width="1.2" vector-effect="non-scaling-stroke"/><path transform="translate(857.50 590.40) scale(1.15 0.958)" d="M7.4 2.2L6 0.6H2L0.6 2V4.4L2 5.8H6L7.4 7.2V10L6 11.4H2L0.6 10M4 -1.2V13.2" fill="none" stroke="#c6c6c6" stroke-width="1.2" vector-effect="non-scaling-stroke"/><path transform="translate(868.40 590.40) scale(1.15 0.958)" d="M0.6 1.2L1.6 0.2H6.2L7.4 1.4V4.6L6.2 5.8H3M6.2 5.8L7.4 7V10.6L6.2 11.8H1.6L0.6 10.8" fill="none" stroke="#c6c6c6" stroke-width="1.2" vector-effect="non-scaling-stroke"/><path d="M841.1 601.9h11.0M846.6 596.4v11.0" stroke="#bdbdbd" stroke-width="1"/><path transform="translate(846.60 616.30) scale(1.15 0.958)" d="M8 0H0V12H8M0 6H6" fill="none" stroke="#c6c6c6" stroke-width="1.2" vector-effect="non-scaling-stroke"/><path transform="translate(857.50 616.30) scale(1.15 0.958)" d="M7.4 2.2L6 0.6H2L0.6 2V4.4L2 5.8H6L7.4 7.2V10L6 11.4H2L0.6 10M4 -1.2V13.2" fill="none" stroke="#c6c6c6" stroke-width="1.2" vector-effect="non-scaling-stroke"/><path transform="translate(868.40 616.30) scale(1.15 0.958)" d="M5.8 12V0.2L0.4 8.4V8.8H7.8" fill="none" stroke="#c6c6c6" stroke-width="1.2" vector-effect="non-scaling-stroke"/><path d="M841.1 627.8h11.0M846.6 622.3v11.0" stroke="#bdbdbd" stroke-width="1"/><path transform="translate(879.40 564.40) scale(1.15 0.958)" d="M8 0H0V12H8M0 6H6" fill="none" stroke="#c6c6c6" stroke-width="1.2" vector-effect="non-scaling-stroke"/><path transform="translate(890.30 564.40) scale(1.15 0.958)" d="M7.4 2.2L6 0.6H2L0.6 2V4.4L2 5.8H6L7.4 7.2V10L6 11.4H2L0.6 10M4 -1.2V13.2" fill="none" stroke="#c6c6c6" stroke-width="1.2" vector-effect="non-scaling-stroke"/><path transform="translate(901.20 564.40) scale(1.15 0.958)" d="M7.4 0.2H1L0.6 5.4L2 4.6H6L7.4 6V10.4L6 11.8H2L0.6 10.6" fill="none" stroke="#c6c6c6" stroke-width="1.2" vector-effect="non-scaling-stroke"/><path d="M873.9000000000001 575.9h11.0M879.4000000000001 570.4v11.0" stroke="#bdbdbd" stroke-width="1"/><path transform="translate(879.40 590.40) scale(1.15 0.958)" d="M8 0H0V12H8M0 6H6" fill="none" stroke="#c6c6c6" stroke-width="1.2" vector-effect="non-scaling-stroke"/><path transform="translate(890.30 590.40) scale(1.15 0.958)" d="M7.4 2.2L6 0.6H2L0.6 2V4.4L2 5.8H6L7.4 7.2V10L6 11.4H2L0.6 10M4 -1.2V13.2" fill="none" stroke="#c6c6c6" stroke-width="1.2" vector-effect="non-scaling-stroke"/><path transform="translate(901.20 590.40) scale(1.15 0.958)" d="M7 1L6 0.2H2.4L0.6 2.2V10L2 11.8H6L7.4 10.4V6.6L6 5.2H2L0.6 6.6" fill="none" stroke="#c6c6c6" stroke-width="1.2" vector-effect="non-scaling-stroke"/><path d="M873.9000000000001 601.9h11.0M879.4000000000001 596.4v11.0" stroke="#bdbdbd" stroke-width="1"/><path transform="translate(879.40 616.30) scale(1.15 0.958)" d="M8 0H0V12H8M0 6H6" fill="none" stroke="#c6c6c6" stroke-width="1.2" vector-effect="non-scaling-stroke"/><path transform="translate(890.30 616.30) scale(1.15 0.958)" d="M7.4 2.2L6 0.6H2L0.6 2V4.4L2 5.8H6L7.4 7.2V10L6 11.4H2L0.6 10M4 -1.2V13.2" fill="none" stroke="#c6c6c6" stroke-width="1.2" vector-effect="non-scaling-stroke"/><path transform="translate(901.20 616.30) scale(1.15 0.958)" d="M0.4 0.2H7.6V0.8L2.6 12" fill="none" stroke="#c6c6c6" stroke-width="1.2" vector-effect="non-scaling-stroke"/><path d="M873.9000000000001 627.8h11.0M879.4000000000001 622.3v11.0" stroke="#bdbdbd" stroke-width="1"/><path transform="translate(911.50 564.40) scale(1.15 0.958)" d="M8 0H0V12H8M0 6H6" fill="none" stroke="#c6c6c6" stroke-width="1.2" vector-effect="non-scaling-stroke"/><path transform="translate(922.40 564.40) scale(1.15 0.958)" d="M7.4 2.2L6 0.6H2L0.6 2V4.4L2 5.8H6L7.4 7.2V10L6 11.4H2L0.6 10M4 -1.2V13.2" fill="none" stroke="#c6c6c6" stroke-width="1.2" vector-effect="non-scaling-stroke"/><path transform="translate(933.30 564.40) scale(1.15 0.958)" d="M2 5.8L0.8 4.6V1.6L2 0.2H6L7.2 1.6V4.6L6 5.8H2L0.6 7.2V10.4L2 11.8H6L7.4 10.4V7.2L6 5.8" fill="none" stroke="#c6c6c6" stroke-width="1.2" vector-effect="non-scaling-stroke"/><path d="M906.0 575.9h11.0M911.5 570.4v11.0" stroke="#bdbdbd" stroke-width="1"/><path transform="translate(911.50 590.40) scale(1.15 0.958)" d="M8 0H0V12H8M0 6H6" fill="none" stroke="#c6c6c6" stroke-width="1.2" vector-effect="non-scaling-stroke"/><path transform="translate(922.40 590.40) scale(1.15 0.958)" d="M7.4 2.2L6 0.6H2L0.6 2V4.4L2 5.8H6L7.4 7.2V10L6 11.4H2L0.6 10M4 -1.2V13.2" fill="none" stroke="#c6c6c6" stroke-width="1.2" vector-effect="non-scaling-stroke"/><path transform="translate(933.30 590.40) scale(1.15 0.958)" d="M1 11L2 11.8H5.6L7.4 9.8V2L6 0.2H2L0.6 1.6V5.4L2 6.8H6L7.4 5.4" fill="none" stroke="#c6c6c6" stroke-width="1.2" vector-effect="non-scaling-stroke"/><path d="M906.0 601.9h11.0M911.5 596.4v11.0" stroke="#bdbdbd" stroke-width="1"/><path transform="translate(911.50 616.30) scale(1.15 0.958)" d="M8 0H0V12H8M0 6H6" fill="none" stroke="#c6c6c6" stroke-width="1.2" vector-effect="non-scaling-stroke"/><path transform="translate(922.40 616.30) scale(1.15 0.958)" d="M7.4 2.2L6 0.6H2L0.6 2V4.4L2 5.8H6L7.4 7.2V10L6 11.4H2L0.6 10M4 -1.2V13.2" fill="none" stroke="#c6c6c6" stroke-width="1.2" vector-effect="non-scaling-stroke"/><path transform="translate(933.30 616.30) scale(1.15 0.958)" d="M1.2 2.6L4.2 0V12M1 12H7.4" fill="none" stroke="#c6c6c6" stroke-width="1.2" vector-effect="non-scaling-stroke"/><path transform="translate(944.20 616.30) scale(1.15 0.958)" d="M2 0.2H6L7.4 1.8V10.2L6 11.8H2L0.6 10.2V1.8z" fill="none" stroke="#c6c6c6" stroke-width="1.2" vector-effect="non-scaling-stroke"/><path d="M906.0 627.8h11.0M911.5 622.3v11.0" stroke="#bdbdbd" stroke-width="1"/><path transform="translate(715.40 596.00) scale(1.15 0.958)" d="M8 0H0V12H8M0 6H6" fill="none" stroke="#c6c6c6" stroke-width="1.2" vector-effect="non-scaling-stroke"/><path transform="translate(726.30 596.00) scale(1.15 0.958)" d="M7.4 2.2L6 0.6H2L0.6 2V4.4L2 5.8H6L7.4 7.2V10L6 11.4H2L0.6 10M4 -1.2V13.2" fill="none" stroke="#c6c6c6" stroke-width="1.2" vector-effect="non-scaling-stroke"/><path transform="translate(737.20 596.00) scale(1.15 0.958)" d="M1.2 2.6L4.2 0V12M1 12H7.4" fill="none" stroke="#c6c6c6" stroke-width="1.2" vector-effect="non-scaling-stroke"/><path transform="translate(748.10 596.00) scale(1.15 0.958)" d="M1.2 2.6L4.2 0V12M1 12H7.4" fill="none" stroke="#c6c6c6" stroke-width="1.2" vector-effect="non-scaling-stroke"/><path d="M709.9000000000001 607.5h11.0M715.4000000000001 602.0v11.0" stroke="#bdbdbd" stroke-width="1"/><path transform="translate(715.40 623.20) scale(1.15 0.958)" d="M8 0H0V12H8M0 6H6" fill="none" stroke="#c6c6c6" stroke-width="1.2" vector-effect="non-scaling-stroke"/><path transform="translate(726.30 623.20) scale(1.15 0.958)" d="M7.4 2.2L6 0.6H2L0.6 2V4.4L2 5.8H6L7.4 7.2V10L6 11.4H2L0.6 10M4 -1.2V13.2" fill="none" stroke="#c6c6c6" stroke-width="1.2" vector-effect="non-scaling-stroke"/><path transform="translate(737.20 623.20) scale(1.15 0.958)" d="M1.2 2.6L4.2 0V12M1 12H7.4" fill="none" stroke="#c6c6c6" stroke-width="1.2" vector-effect="non-scaling-stroke"/><path transform="translate(748.10 623.20) scale(1.15 0.958)" d="M0.6 2L2.2 0.4H5.8L7.4 2V4.6L0.6 11.6V12H7.6" fill="none" stroke="#c6c6c6" stroke-width="1.2" vector-effect="non-scaling-stroke"/><path d="M709.9000000000001 634.7h11.0M715.4000000000001 629.2v11.0" stroke="#bdbdbd" stroke-width="1"/><path transform="translate(846.60 649.10) scale(1.15 0.958)" d="M8 0H0V12H8M0 6H6" fill="none" stroke="#c6c6c6" stroke-width="1.2" vector-effect="non-scaling-stroke"/><path transform="translate(857.50 649.10) scale(1.15 0.958)" d="M7.4 2.2L6 0.6H2L0.6 2V4.4L2 5.8H6L7.4 7.2V10L6 11.4H2L0.6 10M4 -1.2V13.2" fill="none" stroke="#c6c6c6" stroke-width="1.2" vector-effect="non-scaling-stroke"/><path transform="translate(868.40 649.10) scale(1.15 0.958)" d="M1.2 2.6L4.2 0V12M1 12H7.4" fill="none" stroke="#c6c6c6" stroke-width="1.2" vector-effect="non-scaling-stroke"/><path transform="translate(879.30 649.10) scale(1.15 0.958)" d="M0.6 1.2L1.6 0.2H6.2L7.4 1.4V4.6L6.2 5.8H3M6.2 5.8L7.4 7V10.6L6.2 11.8H1.6L0.6 10.8" fill="none" stroke="#c6c6c6" stroke-width="1.2" vector-effect="non-scaling-stroke"/><path d="M841.1 660.6h11.0M846.6 655.1v11.0" stroke="#bdbdbd" stroke-width="1"/><path transform="translate(872.60 649.10) scale(1.15 0.958)" d="M8 0H0V12H8M0 6H6" fill="none" stroke="#c6c6c6" stroke-width="1.2" vector-effect="non-scaling-stroke"/><path transform="translate(883.50 649.10) scale(1.15 0.958)" d="M7.4 2.2L6 0.6H2L0.6 2V4.4L2 5.8H6L7.4 7.2V10L6 11.4H2L0.6 10M4 -1.2V13.2" fill="none" stroke="#c6c6c6" stroke-width="1.2" vector-effect="non-scaling-stroke"/><path transform="translate(894.40 649.10) scale(1.15 0.958)" d="M1.2 2.6L4.2 0V12M1 12H7.4" fill="none" stroke="#c6c6c6" stroke-width="1.2" vector-effect="non-scaling-stroke"/><path transform="translate(905.30 649.10) scale(1.15 0.958)" d="M5.8 12V0.2L0.4 8.4V8.8H7.8" fill="none" stroke="#c6c6c6" stroke-width="1.2" vector-effect="non-scaling-stroke"/><path d="M867.1 660.6h11.0M872.6 655.1v11.0" stroke="#bdbdbd" stroke-width="1"/><path transform="translate(898.50 649.10) scale(1.15 0.958)" d="M8 0H0V12H8M0 6H6" fill="none" stroke="#c6c6c6" stroke-width="1.2" vector-effect="non-scaling-stroke"/><path transform="translate(909.40 649.10) scale(1.15 0.958)" d="M7.4 2.2L6 0.6H2L0.6 2V4.4L2 5.8H6L7.4 7.2V10L6 11.4H2L0.6 10M4 -1.2V13.2" fill="none" stroke="#c6c6c6" stroke-width="1.2" vector-effect="non-scaling-stroke"/><path transform="translate(920.30 649.10) scale(1.15 0.958)" d="M1.2 2.6L4.2 0V12M1 12H7.4" fill="none" stroke="#c6c6c6" stroke-width="1.2" vector-effect="non-scaling-stroke"/><path transform="translate(931.20 649.10) scale(1.15 0.958)" d="M7.4 0.2H1L0.6 5.4L2 4.6H6L7.4 6V10.4L6 11.8H2L0.6 10.6" fill="none" stroke="#c6c6c6" stroke-width="1.2" vector-effect="non-scaling-stroke"/><path d="M893.0 660.6h11.0M898.5 655.1v11.0" stroke="#bdbdbd" stroke-width="1"/><path transform="translate(918.30 649.10) scale(1.15 0.958)" d="M8 0H0V12H8M0 6H6" fill="none" stroke="#c6c6c6" stroke-width="1.2" vector-effect="non-scaling-stroke"/><path transform="translate(929.20 649.10) scale(1.15 0.958)" d="M7.4 2.2L6 0.6H2L0.6 2V4.4L2 5.8H6L7.4 7.2V10L6 11.4H2L0.6 10M4 -1.2V13.2" fill="none" stroke="#c6c6c6" stroke-width="1.2" vector-effect="non-scaling-stroke"/><path transform="translate(940.10 649.10) scale(1.15 0.958)" d="M1.2 2.6L4.2 0V12M1 12H7.4" fill="none" stroke="#c6c6c6" stroke-width="1.2" vector-effect="non-scaling-stroke"/><path transform="translate(951.00 649.10) scale(1.15 0.958)" d="M7 1L6 0.2H2.4L0.6 2.2V10L2 11.8H6L7.4 10.4V6.6L6 5.2H2L0.6 6.6" fill="none" stroke="#c6c6c6" stroke-width="1.2" vector-effect="non-scaling-stroke"/><path d="M912.8000000000001 660.6h11.0M918.3000000000001 655.1v11.0" stroke="#bdbdbd" stroke-width="1"/><path transform="translate(779.00 570.30) scale(1.15 0.958)" d="M8 0H0V12H8M0 6H6" fill="none" stroke="#c6c6c6" stroke-width="1.2" vector-effect="non-scaling-stroke"/><path transform="translate(789.90 570.30) scale(1.15 0.958)" d="M7.4 2.2L6 0.6H2L0.6 2V4.4L2 5.8H6L7.4 7.2V10L6 11.4H2L0.6 10M4 -1.2V13.2" fill="none" stroke="#c6c6c6" stroke-width="1.2" vector-effect="non-scaling-stroke"/><path transform="translate(800.80 570.30) scale(1.15 0.958)" d="M1.2 2.6L4.2 0V12M1 12H7.4" fill="none" stroke="#c6c6c6" stroke-width="1.2" vector-effect="non-scaling-stroke"/><path d="M795.5 569v18.5" stroke="#c4c4c4" stroke-width="1"/><path d="M784.3 641.4h22M795.3 630.4v22" stroke="#bdbdbd" stroke-width="1"/><circle cx="752.5" cy="601.2" r="5.5" fill="none" stroke="#5fba76" stroke-width="3.9" opacity=".92"/><circle cx="752.5" cy="627.2" r="5.5" fill="none" stroke="#5fba76" stroke-width="3.9" opacity=".92"/><circle cx="752.5" cy="654.1" r="5.5" fill="none" stroke="#5fba76" stroke-width="3.9" opacity=".92"/><circle cx="752.5" cy="680.0" r="5.5" fill="none" stroke="#5fba76" stroke-width="3.9" opacity=".92"/><circle cx="837.5" cy="601.2" r="5.5" fill="none" stroke="#5fba76" stroke-width="3.9" opacity=".92"/><circle cx="837.5" cy="627.2" r="5.5" fill="none" stroke="#5fba76" stroke-width="3.9" opacity=".92"/><circle cx="837.5" cy="654.1" r="5.5" fill="none" stroke="#5fba76" stroke-width="3.9" opacity=".92"/><circle cx="837.5" cy="680.0" r="5.5" fill="none" stroke="#5fba76" stroke-width="3.9" opacity=".92"/><circle cx="729.6" cy="626.8" r="6.3" fill="none" stroke="#5fba76" stroke-width="4.4" opacity=".88"/><circle cx="729.6" cy="626.8" r="4.1" fill="#c2c2c2" opacity=".85"/><circle cx="729.6" cy="654.4" r="6.3" fill="none" stroke="#5fba76" stroke-width="4.4" opacity=".88"/><circle cx="729.6" cy="654.4" r="4.1" fill="#c2c2c2" opacity=".85"/><circle cx="860.4" cy="595.4" r="6.3" fill="none" stroke="#5fba76" stroke-width="4.4" opacity=".88"/><circle cx="860.4" cy="595.4" r="4.1" fill="#c2c2c2" opacity=".85"/><circle cx="860.4" cy="621.4" r="6.3" fill="none" stroke="#5fba76" stroke-width="4.4" opacity=".88"/><circle cx="860.4" cy="621.4" r="4.1" fill="#c2c2c2" opacity=".85"/><circle cx="860.4" cy="647.3" r="6.3" fill="none" stroke="#5fba76" stroke-width="4.4" opacity=".88"/><circle cx="860.4" cy="647.3" r="4.1" fill="#c2c2c2" opacity=".85"/><circle cx="893.2" cy="595.4" r="6.3" fill="none" stroke="#5fba76" stroke-width="4.4" opacity=".88"/><circle cx="893.2" cy="595.4" r="4.1" fill="#c2c2c2" opacity=".85"/><circle cx="893.2" cy="621.4" r="6.3" fill="none" stroke="#5fba76" stroke-width="4.4" opacity=".88"/><circle cx="893.2" cy="621.4" r="4.1" fill="#c2c2c2" opacity=".85"/><circle cx="893.2" cy="647.3" r="6.3" fill="none" stroke="#5fba76" stroke-width="4.4" opacity=".88"/><circle cx="893.2" cy="647.3" r="4.1" fill="#c2c2c2" opacity=".85"/><circle cx="925.3" cy="595.4" r="6.3" fill="none" stroke="#5fba76" stroke-width="4.4" opacity=".88"/><circle cx="925.3" cy="595.4" r="4.1" fill="#c2c2c2" opacity=".85"/><circle cx="925.3" cy="621.4" r="6.3" fill="none" stroke="#5fba76" stroke-width="4.4" opacity=".88"/><circle cx="925.3" cy="621.4" r="4.1" fill="#c2c2c2" opacity=".85"/><circle cx="925.3" cy="647.3" r="6.3" fill="none" stroke="#5fba76" stroke-width="4.4" opacity=".88"/><circle cx="925.3" cy="647.3" r="4.1" fill="#c2c2c2" opacity=".85"/><circle cx="860.4" cy="680.1" r="6.3" fill="none" stroke="#5fba76" stroke-width="4.4" opacity=".88"/><circle cx="860.4" cy="680.1" r="4.1" fill="#c2c2c2" opacity=".85"/><circle cx="886.4" cy="680.1" r="6.3" fill="none" stroke="#5fba76" stroke-width="4.4" opacity=".88"/><circle cx="886.4" cy="680.1" r="4.1" fill="#c2c2c2" opacity=".85"/><circle cx="912.3" cy="680.1" r="6.3" fill="none" stroke="#5fba76" stroke-width="4.4" opacity=".88"/><circle cx="912.3" cy="680.1" r="4.1" fill="#c2c2c2" opacity=".85"/><circle cx="932.1" cy="680.1" r="6.3" fill="none" stroke="#5fba76" stroke-width="4.4" opacity=".88"/><circle cx="932.1" cy="680.1" r="4.1" fill="#c2c2c2" opacity=".85"/><path d="M731 626.8L738 626.8L754.4 611L827.8 610.7L837.5 601" fill="none" stroke="#e8405a" stroke-width="1.8" stroke-linejoin="round"/><path d="M752.5 627.2L818 627L833.6 611L844 611L854.3 601L860.4 595.4" fill="none" stroke="#e8405a" stroke-width="1.8" stroke-linejoin="round"/><path d="M752.5 654L796 654L834.5 614L851 614L859.5 605L881 605L886.8 599.7L893.2 595.4" fill="none" stroke="#e8405a" stroke-width="1.8" stroke-linejoin="round"/><path d="M837.5 627L837.5 640.6L877 680L886.4 680" fill="none" stroke="#e8405a" stroke-width="1.8" stroke-linejoin="round"/><path d="M837.5 680L860.4 680" fill="none" stroke="#e8405a" stroke-width="1.8" stroke-linejoin="round"/><path d="M860.4 621.4L925.3 621.4L935.4 631.5L935.4 651.6L932.8 654.2L932.8 680" fill="none" stroke="#e8405a" stroke-width="1.8" stroke-linejoin="round"/><path d="M860.4 647.3L901.7 647.3L912 658.7L912 680" fill="none" stroke="#e8405a" stroke-width="1.8" stroke-linejoin="round"/><path d="M925.3 647.3L912 658.7" fill="none" stroke="#e8405a" stroke-width="1.8" stroke-linejoin="round"/><path d="M729.6 654.4L752.5 680" fill="none" stroke="#e8405a" stroke-width="1.8" stroke-linejoin="round"/><path d="M837.5 601L846 609.5L853.7 616L860.4 621.4" fill="none" stroke="#2a80d8" stroke-width="1.8" stroke-linejoin="round"/><path d="M752.5 680L824.5 680L834.3 669L840.8 662.6L846.6 660L865.4 631.5L880.9 616L889 607L895 605L915.9 605L922.4 598.4L925.3 595.4" fill="none" stroke="#2a80d8" stroke-width="1.8" stroke-linejoin="round"/><path d="M837.5 654.2L846 646" fill="none" stroke="#2a80d8" stroke-width="1.8" stroke-linejoin="round"/></svg>
<div style="left:801px;top:1006px;width:317px;height:24px;background:#f1f1f1"></div>
<svg style="left:0px;top:0px;pointer-events:none" width="1920" height="1080" viewBox="0 0 1920 1080"><circle cx="812" cy="1018" r="6.8" fill="#7aaee6" stroke="#5a7ea8" stroke-width=".8"/><rect x="811" y="1016.5" width="2" height="5.5" fill="#fff"/><circle cx="812" cy="1014.2" r="1.1" fill="#fff"/><ellipse cx="838" cy="1018" rx="8" ry="5" fill="#3a3a3a"/><ellipse cx="838" cy="1017.8" rx="3.2" ry="3" fill="none" stroke="#eee" stroke-width="1.2"/><path d="M869 1024.5q0-7.5-7.5-7.5h-3.5" fill="none" stroke="#555" stroke-width="2.2"/><path d="M862 1012.3l-4.7 4.7 4.7 4.7" fill="none" stroke="#555" stroke-width="2.2"/><path d="M885 1024.5q0-7.5 7.5-7.5h3.5" fill="none" stroke="#8d8d8d" stroke-width="2.2"/><path d="M892 1012.3l4.7 4.7-4.7 4.7" fill="none" stroke="#8d8d8d" stroke-width="2.2"/><circle cx="914.6" cy="1016.5" r="5.8" fill="#f8f8f8" stroke="#7a7a7a" stroke-width=".9"/><path d="M918.8000000000001 1020.7l4.3 4.3" stroke="#333" stroke-width="2"/><path d="M912.1 1016.5h5M914.6 1014v5" stroke="#3aa0f0" stroke-width="1"/><circle cx="940.6" cy="1016.5" r="5.8" fill="#f8f8f8" stroke="#7a7a7a" stroke-width=".9"/><path d="M944.8000000000001 1020.7l4.3 4.3" stroke="#333" stroke-width="2"/><path d="M938.1 1016.5h5" stroke="#3aa0f0" stroke-width="1"/><circle cx="966.6" cy="1016.5" r="5.8" fill="#f8f8f8" stroke="#7a7a7a" stroke-width=".9"/><path d="M970.8000000000001 1020.7l4.3 4.3" stroke="#333" stroke-width="2"/><rect x="963.1" y="1014" width="7" height="4.5" fill="#6aaee8"/><rect x="990" y="1010" width="1" height="16" fill="#555"/><rect x="994.5" y="1010" width="1" height="16" fill="#555"/><rect x="999" y="1010" width="1" height="16" fill="#555"/><rect x="987" y="1014" width="15" height="1" fill="#555"/><rect x="987" y="1018" width="15" height="1" fill="#555"/><rect x="987" y="1022" width="15" height="1" fill="#555"/><path d="M1012 1018h16M1020 1010v16" stroke="#777" stroke-width="1"/><circle cx="1020" cy="1018" r="1.2" fill="#333"/><circle cx="1046" cy="1018" r="8" fill="#e8334f"/><rect x="1041" y="1016.5" width="10" height="3" fill="#fff"/><rect x="1061" y="1006" width="26" height="24" fill="#0a8fd6"/><rect x="1064.5" y="1010" width="14" height="10.5" fill="none" stroke="#a8e06f" stroke-width="1" stroke-dasharray="2 1.5"/><path d="M1074 1018v9l2-1.8 1.8 3.6 1.4-.7-1.8-3.5h2.8z" fill="#fff"/><path d="M1093.5 1010v8M1093.5 1020v6M1091 1018h10q4 0 4 2.5t-4 2.5h-10" fill="none" stroke="#555" stroke-width="1"/><path d="M1091 1018.5h11" stroke="#7cc8f0" stroke-width="1.5"/><path d="M1108 1015.5h6l-3 3.5z" fill="#222"/></svg>
</body></html>
